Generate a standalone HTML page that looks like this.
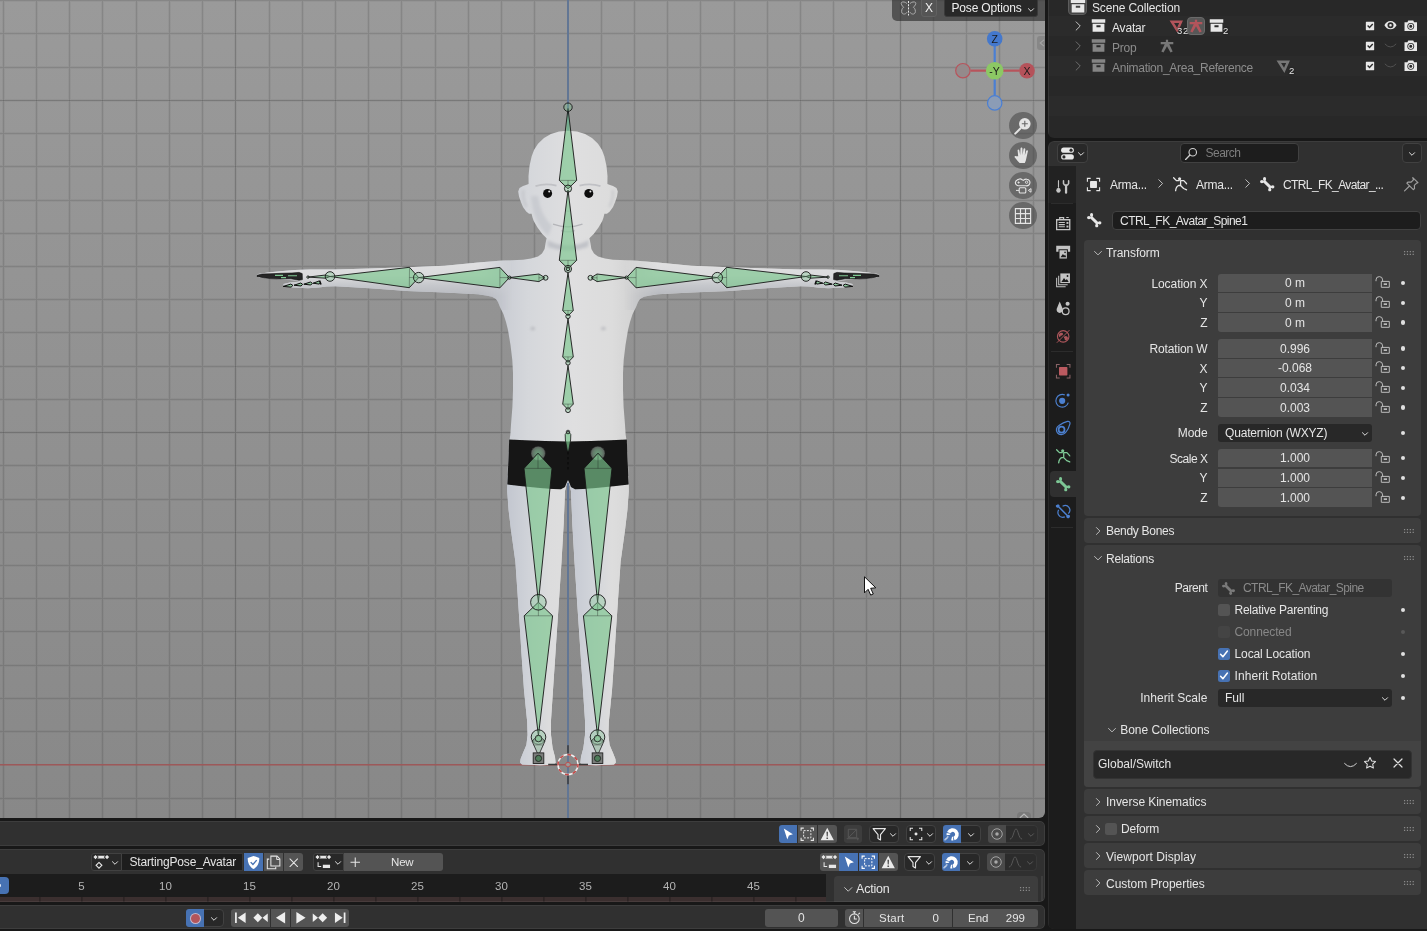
<!DOCTYPE html>
<html><head><meta charset="utf-8"><title>Blender</title>
<style>
*{box-sizing:border-box;margin:0;padding:0}
html,body{width:1427px;height:931px;overflow:hidden;background:#181818;font-family:"Liberation Sans",sans-serif;font-size:12px;color:#e5e5e5}
.abs{position:absolute}
.area{position:absolute;overflow:hidden}
#vp{left:0;top:0;width:1045px;height:818px;border-radius:0 0 6px 0;background:linear-gradient(#9a9a9a,#888888)}
#vp:after{content:"";position:absolute;left:-2px;top:-2px;width:1047px;height:820px;border-radius:0 0 6px 0;border:1px solid rgba(255,255,255,0.16);pointer-events:none}
#outl{left:1048px;top:0;width:379px;height:137.700px;border-radius:0 0 0 6px;background:#282828}
#outl:after{content:"";position:absolute;left:0;top:-2px;width:381px;height:139.700px;border-radius:0 0 0 6px;border:1px solid rgba(255,255,255,0.07);pointer-events:none}
#props{left:1048px;top:141px;width:379px;height:788px;border-radius:6px 0 0 6px;background:#303030}
#props:after{content:"";position:absolute;left:0;top:0;width:381px;height:788px;border-radius:6px 0 0 6px;border:1px solid rgba(255,255,255,0.06);pointer-events:none}
#p1{left:0;top:821px;width:1045px;height:25px;border-radius:0 5px 5px 0;background:#303030}
#p2{left:0;top:849px;width:1045px;height:52.600px;border-radius:0 5px 5px 0;background:#303030}
#p3{left:0;top:905px;width:1045px;height:24px;border-radius:0 5px 5px 0;background:#303030}
#p1:after,#p2:after,#p3:after{content:"";position:absolute;left:-2px;top:0;right:0;bottom:0;border-radius:0 5px 5px 0;border:1px solid rgba(255,255,255,0.065);pointer-events:none}
.t{position:absolute;white-space:nowrap;line-height:14px;height:14px}
.dim{color:#989898}
.fld{position:absolute;background:#545454;height:19px;left:170px;width:154px;text-align:center;line-height:19px;color:#e5e5e5}
.btn{position:absolute;background:#545454;border-radius:3px}
.dd{position:absolute;background:#282828;border-radius:4px;border:1px solid #414141}
.blue{background:#4772b3}
.panel{position:absolute;left:36px;width:337px;background:#3d3d3d;border-radius:4px}
.ph{position:absolute;left:22px;top:6.400px;line-height:14px;white-space:nowrap}
svg{position:absolute;overflow:visible}
#root{position:absolute;left:0;top:0;width:1427px;height:931px;will-change:transform}
</style></head><body><div id="root">
<div id="vp" class="area">
<svg id="grid" width="1045" height="818" viewBox="0 0 1045 818" style="left:0;top:0" shape-rendering="crispEdges">
<path d="M3.5 0V818M36.5 0V818M69.5 0V818M102.5 0V818M136.5 0V818M169.5 0V818M202.5 0V818M269.5 0V818M302.5 0V818M335.5 0V818M368.5 0V818M401.5 0V818M435.5 0V818M468.5 0V818M501.5 0V818M534.5 0V818M0 798.5H1045M601.5 0V818M0 731.5H1045M634.5 0V818M0 698.5H1045M667.5 0V818M0 665.5H1045M700.5 0V818M0 631.5H1045M734.5 0V818M0 598.5H1045M767.5 0V818M0 565.5H1045M800.5 0V818M0 532.5H1045M833.5 0V818M0 499.5H1045M866.5 0V818M0 465.5H1045M933.5 0V818M0 399.5H1045M966.5 0V818M0 366.5H1045M999.5 0V818M0 332.5H1045M1033.5 0V818M0 299.5H1045M0 266.5H1045M0 233.5H1045M0 200.5H1045M0 166.5H1045M0 133.5H1045M0 67.5H1045M0 33.5H1045M0 0.5H1045M235.5 0V818M900.5 0V818M0 432.5H1045M0 100.5H1045" stroke="#000" stroke-opacity="0.035" stroke-width="3" fill="none"/>
<path d="M3.5 0V818M36.5 0V818M69.5 0V818M102.5 0V818M136.5 0V818M169.5 0V818M202.5 0V818M269.5 0V818M302.5 0V818M335.5 0V818M368.5 0V818M401.5 0V818M435.5 0V818M468.5 0V818M501.5 0V818M534.5 0V818M0 798.5H1045M601.5 0V818M0 731.5H1045M634.5 0V818M0 698.5H1045M667.5 0V818M0 665.5H1045M700.5 0V818M0 631.5H1045M734.5 0V818M0 598.5H1045M767.5 0V818M0 565.5H1045M800.5 0V818M0 532.5H1045M833.5 0V818M0 499.5H1045M866.5 0V818M0 465.5H1045M933.5 0V818M0 399.5H1045M966.5 0V818M0 366.5H1045M999.5 0V818M0 332.5H1045M1033.5 0V818M0 299.5H1045M0 266.5H1045M0 233.5H1045M0 200.5H1045M0 166.5H1045M0 133.5H1045M0 67.5H1045M0 33.5H1045M0 0.5H1045" stroke="#000" stroke-opacity="0.092" stroke-width="1" fill="none"/>
<path d="M235.5 0V818M900.5 0V818M0 432.5H1045M0 100.5H1045" stroke="#000" stroke-opacity="0.17" stroke-width="1" fill="none"/>
<rect x="0" y="764" width="1045" height="1" fill="#9c595a"/><rect x="0" y="765" width="1045" height="1" fill="#9c595a" fill-opacity="0.55"/>
<rect x="567" y="0" width="2" height="818" fill="#627694"/>
</svg>
<svg id="model" width="1045" height="818" viewBox="0 0 1045 818" style="left:0;top:0">
<defs>
<linearGradient id="bodyg" gradientUnits="userSpaceOnUse" x1="500" y1="0" x2="640" y2="0">
<stop offset="0" stop-color="#c9ccd3"/><stop offset="0.2" stop-color="#d5d7db"/><stop offset="0.52" stop-color="#dfdfe0"/><stop offset="0.8" stop-color="#dcdcdc"/><stop offset="1" stop-color="#d0d0d0"/></linearGradient>
<linearGradient id="legL" gradientUnits="userSpaceOnUse" x1="506" y1="0" x2="567" y2="0"><stop offset="0" stop-color="#c2c6cf"/><stop offset="0.35" stop-color="#cfd2d8"/><stop offset="0.7" stop-color="#dcdcdd"/><stop offset="1" stop-color="#dedede"/></linearGradient>
<linearGradient id="legR" gradientUnits="userSpaceOnUse" x1="569" y1="0" x2="630" y2="0"><stop offset="0" stop-color="#c4c8d1"/><stop offset="0.35" stop-color="#d0d3d9"/><stop offset="0.7" stop-color="#dddddd"/><stop offset="1" stop-color="#d8d8d8"/></linearGradient>
<radialGradient id="hipg"><stop offset="0" stop-color="#6a9a78"/><stop offset="0.6" stop-color="#657f6c"/><stop offset="1" stop-color="#5a5d5b"/></radialGradient>
<clipPath id="legLc"><rect x="490" y="476" width="78" height="300"/></clipPath>
<clipPath id="legRc"><rect x="568" y="476" width="78" height="300"/></clipPath>
<linearGradient id="armg" gradientUnits="userSpaceOnUse" x1="0" y1="262" x2="0" y2="296">
<stop offset="0" stop-color="#e0e0e1"/><stop offset="0.4" stop-color="#dbdbdd"/><stop offset="0.68" stop-color="#c6c8cc"/><stop offset="1" stop-color="#b6b8be"/></linearGradient>
<linearGradient id="mgL" gradientUnits="userSpaceOnUse" x1="478" y1="0" x2="512" y2="0"><stop offset="0" stop-color="#fff"/><stop offset="1" stop-color="#000"/></linearGradient>
<linearGradient id="mgR" gradientUnits="userSpaceOnUse" x1="658" y1="0" x2="624" y2="0"><stop offset="0" stop-color="#fff"/><stop offset="1" stop-color="#000"/></linearGradient>
<mask id="armclipL" maskUnits="userSpaceOnUse" x="240" y="250" width="280" height="60"><rect x="240" y="250" width="280" height="60" fill="url(#mgL)"/></mask>
<mask id="armclipR" maskUnits="userSpaceOnUse" x="616" y="250" width="280" height="60"><rect x="616" y="250" width="280" height="60" fill="url(#mgR)"/></mask>
<clipPath id="shortsclip"><path d="M568.0 441.6 L545.0 441.0 L525.0 440.2 L509.2 439.6 L508.4 460.0 L507.6 478.0 L507.3 484.5 L520.0 486.0 L540.0 488.0 L553.0 489.0 L561.0 489.2 L565.0 487.0 L566.6 483.0 L568.0 480.0 L569.4 483.0 L571.0 487.0 L575.0 489.2 L583.0 489.0 L596.0 488.0 L616.0 486.0 L628.7 484.5 L628.4 478.0 L627.6 460.0 L626.8 439.6 L611.0 440.2 L591.0 441.0Z"/></clipPath>
<filter id="bl1" x="-20%" y="-20%" width="140%" height="140%"><feGaussianBlur stdDeviation="0.6"/></filter>
<filter id="bl2" x="-50%" y="-50%" width="200%" height="200%"><feGaussianBlur stdDeviation="1.6"/></filter>
<filter id="bl4" x="-50%" y="-50%" width="200%" height="200%"><feGaussianBlur stdDeviation="4"/></filter>
</defs>
<g filter="url(#bl1)"><path d="M568.0 130.8 L559.0 131.6 L550.9 134.0 L544.0 138.0 L538.0 143.7 L534.0 150.0 L531.6 156.6 L529.5 166.0 L528.5 176.0 L528.6 184.0 L526.0 185.0 L523.0 186.0 L519.5 188.0 L518.2 191.5 L519.0 196.5 L520.8 201.7 L523.0 207.0 L526.2 211.6 L529.0 213.8 L531.6 213.8 L532.5 217.5 L533.7 221.0 L537.5 227.5 L542.3 233.9 L546.6 238.2 L545.6 243.0 L544.6 249.0 L542.0 253.5 L538.0 256.5 L531.0 258.6 L523.0 259.7 L502.0 260.6 L478.3 262.6 L444.9 265.7 L406.8 267.2 L370.0 268.6 L335.3 269.5 L310.0 269.6 L294.8 270.0 L280.0 271.2 L268.0 272.6 L258.0 274.0 L256.5 275.6 L259.0 277.4 L270.0 278.6 L283.0 279.6 L296.0 280.4 L300.0 281.6 L290.0 282.6 L283.5 284.0 L283.5 286.0 L292.4 287.6 L308.0 288.2 L318.6 287.6 L327.0 286.4 L335.3 286.2 L353.0 287.2 L373.4 288.6 L406.8 291.0 L444.9 292.6 L478.3 294.2 L486.0 295.4 L492.0 296.8 L496.0 299.0 L498.0 302.0 L500.0 307.0 L503.4 314.0 L506.0 322.0 L508.0 330.0 L510.5 345.0 L512.3 360.0 L513.0 373.0 L513.0 390.0 L512.4 407.0 L511.2 422.0 L510.3 435.0 L509.2 442.0 L508.2 460.0 L507.4 478.0 L507.2 491.0 L508.6 510.0 L511.0 530.0 L515.4 561.7 L518.0 600.0 L520.2 632.6 L521.3 650.9 L524.0 690.0 L527.2 721.7 L527.6 735.0 L526.4 745.0 L523.0 753.0 L520.6 759.0 L520.2 762.6 L522.0 764.6 L540.0 765.2 L553.0 764.8 L555.6 763.0 L555.0 757.0 L552.6 748.0 L551.0 735.0 L550.9 721.7 L553.0 690.0 L555.6 650.9 L556.8 632.6 L559.0 600.0 L561.5 561.7 L563.6 525.0 L565.0 491.0 L566.6 484.0 L568.0 481.5 L569.4 484.0 L571.0 491.0 L572.4 525.0 L574.5 561.7 L577.0 600.0 L579.2 632.6 L580.4 650.9 L583.0 690.0 L585.1 721.7 L585.0 735.0 L583.4 748.0 L581.0 757.0 L580.4 763.0 L583.0 764.8 L596.0 765.2 L614.0 764.6 L615.8 762.6 L615.4 759.0 L613.0 753.0 L609.6 745.0 L608.4 735.0 L608.8 721.7 L612.0 690.0 L614.7 650.9 L615.8 632.6 L618.0 600.0 L620.6 561.7 L625.0 530.0 L627.4 510.0 L628.8 491.0 L628.6 478.0 L627.8 460.0 L626.8 442.0 L625.7 435.0 L624.8 422.0 L623.6 407.0 L623.0 390.0 L623.0 373.0 L623.7 360.0 L625.5 345.0 L628.0 330.0 L630.0 322.0 L632.6 314.0 L636.0 307.0 L638.0 302.0 L640.0 299.0 L644.0 296.8 L650.0 295.4 L657.7 294.2 L691.1 292.6 L729.2 291.0 L762.6 288.6 L783.0 287.2 L800.7 286.2 L809.0 286.4 L817.4 287.6 L828.0 288.2 L843.6 287.6 L852.5 286.0 L852.5 284.0 L846.0 282.6 L836.0 281.6 L840.0 280.4 L853.0 279.6 L866.0 278.6 L877.0 277.4 L879.5 275.6 L878.0 274.0 L868.0 272.6 L856.0 271.2 L841.2 270.0 L826.0 269.6 L800.7 269.5 L766.0 268.6 L729.2 267.2 L691.1 265.7 L657.7 262.6 L634.0 260.6 L613.0 259.7 L605.0 258.6 L598.0 256.5 L594.0 253.5 L591.4 249.0 L590.4 243.0 L589.4 238.2 L593.7 233.9 L598.5 227.5 L602.3 221.0 L603.5 217.5 L604.4 213.8 L607.0 213.8 L609.8 211.6 L613.0 207.0 L615.2 201.7 L617.0 196.5 L617.8 191.5 L616.5 188.0 L613.0 186.0 L610.0 185.0 L607.4 184.0 L607.5 176.0 L606.5 166.0 L604.4 156.6 L602.0 150.0 L598.0 143.7 L592.0 138.0 L585.1 134.0 L577.0 131.6Z" fill="url(#bodyg)"/>
<path d="M568.0 130.8 L559.0 131.6 L550.9 134.0 L544.0 138.0 L538.0 143.7 L534.0 150.0 L531.6 156.6 L529.5 166.0 L528.5 176.0 L528.6 184.0 L526.0 185.0 L523.0 186.0 L519.5 188.0 L518.2 191.5 L519.0 196.5 L520.8 201.7 L523.0 207.0 L526.2 211.6 L529.0 213.8 L531.6 213.8 L532.5 217.5 L533.7 221.0 L537.5 227.5 L542.3 233.9 L546.6 238.2 L545.6 243.0 L544.6 249.0 L542.0 253.5 L538.0 256.5 L531.0 258.6 L523.0 259.7 L502.0 260.6 L478.3 262.6 L444.9 265.7 L406.8 267.2 L370.0 268.6 L335.3 269.5 L310.0 269.6 L294.8 270.0 L280.0 271.2 L268.0 272.6 L258.0 274.0 L256.5 275.6 L259.0 277.4 L270.0 278.6 L283.0 279.6 L296.0 280.4 L300.0 281.6 L290.0 282.6 L283.5 284.0 L283.5 286.0 L292.4 287.6 L308.0 288.2 L318.6 287.6 L327.0 286.4 L335.3 286.2 L353.0 287.2 L373.4 288.6 L406.8 291.0 L444.9 292.6 L478.3 294.2 L486.0 295.4 L492.0 296.8 L496.0 299.0 L498.0 302.0 L500.0 307.0 L503.4 314.0 L506.0 322.0 L508.0 330.0 L510.5 345.0 L512.3 360.0 L513.0 373.0 L513.0 390.0 L512.4 407.0 L511.2 422.0 L510.3 435.0 L509.2 442.0 L508.2 460.0 L507.4 478.0 L507.2 491.0 L508.6 510.0 L511.0 530.0 L515.4 561.7 L518.0 600.0 L520.2 632.6 L521.3 650.9 L524.0 690.0 L527.2 721.7 L527.6 735.0 L526.4 745.0 L523.0 753.0 L520.6 759.0 L520.2 762.6 L522.0 764.6 L540.0 765.2 L553.0 764.8 L555.6 763.0 L555.0 757.0 L552.6 748.0 L551.0 735.0 L550.9 721.7 L553.0 690.0 L555.6 650.9 L556.8 632.6 L559.0 600.0 L561.5 561.7 L563.6 525.0 L565.0 491.0 L566.6 484.0 L568.0 481.5 L569.4 484.0 L571.0 491.0 L572.4 525.0 L574.5 561.7 L577.0 600.0 L579.2 632.6 L580.4 650.9 L583.0 690.0 L585.1 721.7 L585.0 735.0 L583.4 748.0 L581.0 757.0 L580.4 763.0 L583.0 764.8 L596.0 765.2 L614.0 764.6 L615.8 762.6 L615.4 759.0 L613.0 753.0 L609.6 745.0 L608.4 735.0 L608.8 721.7 L612.0 690.0 L614.7 650.9 L615.8 632.6 L618.0 600.0 L620.6 561.7 L625.0 530.0 L627.4 510.0 L628.8 491.0 L628.6 478.0 L627.8 460.0 L626.8 442.0 L625.7 435.0 L624.8 422.0 L623.6 407.0 L623.0 390.0 L623.0 373.0 L623.7 360.0 L625.5 345.0 L628.0 330.0 L630.0 322.0 L632.6 314.0 L636.0 307.0 L638.0 302.0 L640.0 299.0 L644.0 296.8 L650.0 295.4 L657.7 294.2 L691.1 292.6 L729.2 291.0 L762.6 288.6 L783.0 287.2 L800.7 286.2 L809.0 286.4 L817.4 287.6 L828.0 288.2 L843.6 287.6 L852.5 286.0 L852.5 284.0 L846.0 282.6 L836.0 281.6 L840.0 280.4 L853.0 279.6 L866.0 278.6 L877.0 277.4 L879.5 275.6 L878.0 274.0 L868.0 272.6 L856.0 271.2 L841.2 270.0 L826.0 269.6 L800.7 269.5 L766.0 268.6 L729.2 267.2 L691.1 265.7 L657.7 262.6 L634.0 260.6 L613.0 259.7 L605.0 258.6 L598.0 256.5 L594.0 253.5 L591.4 249.0 L590.4 243.0 L589.4 238.2 L593.7 233.9 L598.5 227.5 L602.3 221.0 L603.5 217.5 L604.4 213.8 L607.0 213.8 L609.8 211.6 L613.0 207.0 L615.2 201.7 L617.0 196.5 L617.8 191.5 L616.5 188.0 L613.0 186.0 L610.0 185.0 L607.4 184.0 L607.5 176.0 L606.5 166.0 L604.4 156.6 L602.0 150.0 L598.0 143.7 L592.0 138.0 L585.1 134.0 L577.0 131.6Z" fill="url(#armg)" mask="url(#armclipL)"/>
<path d="M568.0 130.8 L559.0 131.6 L550.9 134.0 L544.0 138.0 L538.0 143.7 L534.0 150.0 L531.6 156.6 L529.5 166.0 L528.5 176.0 L528.6 184.0 L526.0 185.0 L523.0 186.0 L519.5 188.0 L518.2 191.5 L519.0 196.5 L520.8 201.7 L523.0 207.0 L526.2 211.6 L529.0 213.8 L531.6 213.8 L532.5 217.5 L533.7 221.0 L537.5 227.5 L542.3 233.9 L546.6 238.2 L545.6 243.0 L544.6 249.0 L542.0 253.5 L538.0 256.5 L531.0 258.6 L523.0 259.7 L502.0 260.6 L478.3 262.6 L444.9 265.7 L406.8 267.2 L370.0 268.6 L335.3 269.5 L310.0 269.6 L294.8 270.0 L280.0 271.2 L268.0 272.6 L258.0 274.0 L256.5 275.6 L259.0 277.4 L270.0 278.6 L283.0 279.6 L296.0 280.4 L300.0 281.6 L290.0 282.6 L283.5 284.0 L283.5 286.0 L292.4 287.6 L308.0 288.2 L318.6 287.6 L327.0 286.4 L335.3 286.2 L353.0 287.2 L373.4 288.6 L406.8 291.0 L444.9 292.6 L478.3 294.2 L486.0 295.4 L492.0 296.8 L496.0 299.0 L498.0 302.0 L500.0 307.0 L503.4 314.0 L506.0 322.0 L508.0 330.0 L510.5 345.0 L512.3 360.0 L513.0 373.0 L513.0 390.0 L512.4 407.0 L511.2 422.0 L510.3 435.0 L509.2 442.0 L508.2 460.0 L507.4 478.0 L507.2 491.0 L508.6 510.0 L511.0 530.0 L515.4 561.7 L518.0 600.0 L520.2 632.6 L521.3 650.9 L524.0 690.0 L527.2 721.7 L527.6 735.0 L526.4 745.0 L523.0 753.0 L520.6 759.0 L520.2 762.6 L522.0 764.6 L540.0 765.2 L553.0 764.8 L555.6 763.0 L555.0 757.0 L552.6 748.0 L551.0 735.0 L550.9 721.7 L553.0 690.0 L555.6 650.9 L556.8 632.6 L559.0 600.0 L561.5 561.7 L563.6 525.0 L565.0 491.0 L566.6 484.0 L568.0 481.5 L569.4 484.0 L571.0 491.0 L572.4 525.0 L574.5 561.7 L577.0 600.0 L579.2 632.6 L580.4 650.9 L583.0 690.0 L585.1 721.7 L585.0 735.0 L583.4 748.0 L581.0 757.0 L580.4 763.0 L583.0 764.8 L596.0 765.2 L614.0 764.6 L615.8 762.6 L615.4 759.0 L613.0 753.0 L609.6 745.0 L608.4 735.0 L608.8 721.7 L612.0 690.0 L614.7 650.9 L615.8 632.6 L618.0 600.0 L620.6 561.7 L625.0 530.0 L627.4 510.0 L628.8 491.0 L628.6 478.0 L627.8 460.0 L626.8 442.0 L625.7 435.0 L624.8 422.0 L623.6 407.0 L623.0 390.0 L623.0 373.0 L623.7 360.0 L625.5 345.0 L628.0 330.0 L630.0 322.0 L632.6 314.0 L636.0 307.0 L638.0 302.0 L640.0 299.0 L644.0 296.8 L650.0 295.4 L657.7 294.2 L691.1 292.6 L729.2 291.0 L762.6 288.6 L783.0 287.2 L800.7 286.2 L809.0 286.4 L817.4 287.6 L828.0 288.2 L843.6 287.6 L852.5 286.0 L852.5 284.0 L846.0 282.6 L836.0 281.6 L840.0 280.4 L853.0 279.6 L866.0 278.6 L877.0 277.4 L879.5 275.6 L878.0 274.0 L868.0 272.6 L856.0 271.2 L841.2 270.0 L826.0 269.6 L800.7 269.5 L766.0 268.6 L729.2 267.2 L691.1 265.7 L657.7 262.6 L634.0 260.6 L613.0 259.7 L605.0 258.6 L598.0 256.5 L594.0 253.5 L591.4 249.0 L590.4 243.0 L589.4 238.2 L593.7 233.9 L598.5 227.5 L602.3 221.0 L603.5 217.5 L604.4 213.8 L607.0 213.8 L609.8 211.6 L613.0 207.0 L615.2 201.7 L617.0 196.5 L617.8 191.5 L616.5 188.0 L613.0 186.0 L610.0 185.0 L607.4 184.0 L607.5 176.0 L606.5 166.0 L604.4 156.6 L602.0 150.0 L598.0 143.7 L592.0 138.0 L585.1 134.0 L577.0 131.6Z" fill="url(#armg)" mask="url(#armclipR)"/>
<path d="M568.0 130.8 L559.0 131.6 L550.9 134.0 L544.0 138.0 L538.0 143.7 L534.0 150.0 L531.6 156.6 L529.5 166.0 L528.5 176.0 L528.6 184.0 L526.0 185.0 L523.0 186.0 L519.5 188.0 L518.2 191.5 L519.0 196.5 L520.8 201.7 L523.0 207.0 L526.2 211.6 L529.0 213.8 L531.6 213.8 L532.5 217.5 L533.7 221.0 L537.5 227.5 L542.3 233.9 L546.6 238.2 L545.6 243.0 L544.6 249.0 L542.0 253.5 L538.0 256.5 L531.0 258.6 L523.0 259.7 L502.0 260.6 L478.3 262.6 L444.9 265.7 L406.8 267.2 L370.0 268.6 L335.3 269.5 L310.0 269.6 L294.8 270.0 L280.0 271.2 L268.0 272.6 L258.0 274.0 L256.5 275.6 L259.0 277.4 L270.0 278.6 L283.0 279.6 L296.0 280.4 L300.0 281.6 L290.0 282.6 L283.5 284.0 L283.5 286.0 L292.4 287.6 L308.0 288.2 L318.6 287.6 L327.0 286.4 L335.3 286.2 L353.0 287.2 L373.4 288.6 L406.8 291.0 L444.9 292.6 L478.3 294.2 L486.0 295.4 L492.0 296.8 L496.0 299.0 L498.0 302.0 L500.0 307.0 L503.4 314.0 L506.0 322.0 L508.0 330.0 L510.5 345.0 L512.3 360.0 L513.0 373.0 L513.0 390.0 L512.4 407.0 L511.2 422.0 L510.3 435.0 L509.2 442.0 L508.2 460.0 L507.4 478.0 L507.2 491.0 L508.6 510.0 L511.0 530.0 L515.4 561.7 L518.0 600.0 L520.2 632.6 L521.3 650.9 L524.0 690.0 L527.2 721.7 L527.6 735.0 L526.4 745.0 L523.0 753.0 L520.6 759.0 L520.2 762.6 L522.0 764.6 L540.0 765.2 L553.0 764.8 L555.6 763.0 L555.0 757.0 L552.6 748.0 L551.0 735.0 L550.9 721.7 L553.0 690.0 L555.6 650.9 L556.8 632.6 L559.0 600.0 L561.5 561.7 L563.6 525.0 L565.0 491.0 L566.6 484.0 L568.0 481.5 L569.4 484.0 L571.0 491.0 L572.4 525.0 L574.5 561.7 L577.0 600.0 L579.2 632.6 L580.4 650.9 L583.0 690.0 L585.1 721.7 L585.0 735.0 L583.4 748.0 L581.0 757.0 L580.4 763.0 L583.0 764.8 L596.0 765.2 L614.0 764.6 L615.8 762.6 L615.4 759.0 L613.0 753.0 L609.6 745.0 L608.4 735.0 L608.8 721.7 L612.0 690.0 L614.7 650.9 L615.8 632.6 L618.0 600.0 L620.6 561.7 L625.0 530.0 L627.4 510.0 L628.8 491.0 L628.6 478.0 L627.8 460.0 L626.8 442.0 L625.7 435.0 L624.8 422.0 L623.6 407.0 L623.0 390.0 L623.0 373.0 L623.7 360.0 L625.5 345.0 L628.0 330.0 L630.0 322.0 L632.6 314.0 L636.0 307.0 L638.0 302.0 L640.0 299.0 L644.0 296.8 L650.0 295.4 L657.7 294.2 L691.1 292.6 L729.2 291.0 L762.6 288.6 L783.0 287.2 L800.7 286.2 L809.0 286.4 L817.4 287.6 L828.0 288.2 L843.6 287.6 L852.5 286.0 L852.5 284.0 L846.0 282.6 L836.0 281.6 L840.0 280.4 L853.0 279.6 L866.0 278.6 L877.0 277.4 L879.5 275.6 L878.0 274.0 L868.0 272.6 L856.0 271.2 L841.2 270.0 L826.0 269.6 L800.7 269.5 L766.0 268.6 L729.2 267.2 L691.1 265.7 L657.7 262.6 L634.0 260.6 L613.0 259.7 L605.0 258.6 L598.0 256.5 L594.0 253.5 L591.4 249.0 L590.4 243.0 L589.4 238.2 L593.7 233.9 L598.5 227.5 L602.3 221.0 L603.5 217.5 L604.4 213.8 L607.0 213.8 L609.8 211.6 L613.0 207.0 L615.2 201.7 L617.0 196.5 L617.8 191.5 L616.5 188.0 L613.0 186.0 L610.0 185.0 L607.4 184.0 L607.5 176.0 L606.5 166.0 L604.4 156.6 L602.0 150.0 L598.0 143.7 L592.0 138.0 L585.1 134.0 L577.0 131.6Z" fill="url(#legL)" clip-path="url(#legLc)"/>
<path d="M568.0 130.8 L559.0 131.6 L550.9 134.0 L544.0 138.0 L538.0 143.7 L534.0 150.0 L531.6 156.6 L529.5 166.0 L528.5 176.0 L528.6 184.0 L526.0 185.0 L523.0 186.0 L519.5 188.0 L518.2 191.5 L519.0 196.5 L520.8 201.7 L523.0 207.0 L526.2 211.6 L529.0 213.8 L531.6 213.8 L532.5 217.5 L533.7 221.0 L537.5 227.5 L542.3 233.9 L546.6 238.2 L545.6 243.0 L544.6 249.0 L542.0 253.5 L538.0 256.5 L531.0 258.6 L523.0 259.7 L502.0 260.6 L478.3 262.6 L444.9 265.7 L406.8 267.2 L370.0 268.6 L335.3 269.5 L310.0 269.6 L294.8 270.0 L280.0 271.2 L268.0 272.6 L258.0 274.0 L256.5 275.6 L259.0 277.4 L270.0 278.6 L283.0 279.6 L296.0 280.4 L300.0 281.6 L290.0 282.6 L283.5 284.0 L283.5 286.0 L292.4 287.6 L308.0 288.2 L318.6 287.6 L327.0 286.4 L335.3 286.2 L353.0 287.2 L373.4 288.6 L406.8 291.0 L444.9 292.6 L478.3 294.2 L486.0 295.4 L492.0 296.8 L496.0 299.0 L498.0 302.0 L500.0 307.0 L503.4 314.0 L506.0 322.0 L508.0 330.0 L510.5 345.0 L512.3 360.0 L513.0 373.0 L513.0 390.0 L512.4 407.0 L511.2 422.0 L510.3 435.0 L509.2 442.0 L508.2 460.0 L507.4 478.0 L507.2 491.0 L508.6 510.0 L511.0 530.0 L515.4 561.7 L518.0 600.0 L520.2 632.6 L521.3 650.9 L524.0 690.0 L527.2 721.7 L527.6 735.0 L526.4 745.0 L523.0 753.0 L520.6 759.0 L520.2 762.6 L522.0 764.6 L540.0 765.2 L553.0 764.8 L555.6 763.0 L555.0 757.0 L552.6 748.0 L551.0 735.0 L550.9 721.7 L553.0 690.0 L555.6 650.9 L556.8 632.6 L559.0 600.0 L561.5 561.7 L563.6 525.0 L565.0 491.0 L566.6 484.0 L568.0 481.5 L569.4 484.0 L571.0 491.0 L572.4 525.0 L574.5 561.7 L577.0 600.0 L579.2 632.6 L580.4 650.9 L583.0 690.0 L585.1 721.7 L585.0 735.0 L583.4 748.0 L581.0 757.0 L580.4 763.0 L583.0 764.8 L596.0 765.2 L614.0 764.6 L615.8 762.6 L615.4 759.0 L613.0 753.0 L609.6 745.0 L608.4 735.0 L608.8 721.7 L612.0 690.0 L614.7 650.9 L615.8 632.6 L618.0 600.0 L620.6 561.7 L625.0 530.0 L627.4 510.0 L628.8 491.0 L628.6 478.0 L627.8 460.0 L626.8 442.0 L625.7 435.0 L624.8 422.0 L623.6 407.0 L623.0 390.0 L623.0 373.0 L623.7 360.0 L625.5 345.0 L628.0 330.0 L630.0 322.0 L632.6 314.0 L636.0 307.0 L638.0 302.0 L640.0 299.0 L644.0 296.8 L650.0 295.4 L657.7 294.2 L691.1 292.6 L729.2 291.0 L762.6 288.6 L783.0 287.2 L800.7 286.2 L809.0 286.4 L817.4 287.6 L828.0 288.2 L843.6 287.6 L852.5 286.0 L852.5 284.0 L846.0 282.6 L836.0 281.6 L840.0 280.4 L853.0 279.6 L866.0 278.6 L877.0 277.4 L879.5 275.6 L878.0 274.0 L868.0 272.6 L856.0 271.2 L841.2 270.0 L826.0 269.6 L800.7 269.5 L766.0 268.6 L729.2 267.2 L691.1 265.7 L657.7 262.6 L634.0 260.6 L613.0 259.7 L605.0 258.6 L598.0 256.5 L594.0 253.5 L591.4 249.0 L590.4 243.0 L589.4 238.2 L593.7 233.9 L598.5 227.5 L602.3 221.0 L603.5 217.5 L604.4 213.8 L607.0 213.8 L609.8 211.6 L613.0 207.0 L615.2 201.7 L617.0 196.5 L617.8 191.5 L616.5 188.0 L613.0 186.0 L610.0 185.0 L607.4 184.0 L607.5 176.0 L606.5 166.0 L604.4 156.6 L602.0 150.0 L598.0 143.7 L592.0 138.0 L585.1 134.0 L577.0 131.6Z" fill="url(#legR)" clip-path="url(#legRc)"/></g><!-- face -->
<g filter="url(#bl2)">
<path d="M547 240Q568 251 589 240L588 247Q568 254 548 247Z" fill="#b9bcc2" fill-opacity="0.800"/>
<path d="M531 196Q533 222 548 236L552 226Q540 214 538 196Z" fill="#c3c6cc" fill-opacity="0.700"/>
</g>
<g filter="url(#bl1)">
<circle cx="547.600" cy="193.400" r="4.500" fill="#0e0e0e"/><circle cx="588.800" cy="193.400" r="4.500" fill="#0e0e0e"/>
<circle cx="549.200" cy="191.600" r="1" fill="#e8e8e8"/><circle cx="590.400" cy="191.600" r="1" fill="#e8e8e8"/>
<path d="M535.500 186.200Q545 183 556.500 185.600" stroke="#c0c1c5" stroke-width="1.800" fill="none"/>
<path d="M579.500 185.600Q591 183 600.500 186.200" stroke="#c0c1c5" stroke-width="1.800" fill="none"/>
<path d="M553 224.200Q568 229.500 582.500 224.200" stroke="#b4b5b9" stroke-width="1.400" fill="none"/>
<path d="M561 230.500Q568 233 575 230.500" stroke="#c8c9cc" stroke-width="1.600" fill="none"/>
<path d="M565.500 210Q568 212.500 570.500 210" stroke="#c6c7ca" stroke-width="1.400" fill="none"/>
</g>
<g filter="url(#bl2)">
<ellipse cx="532.800" cy="328.600" rx="2.200" ry="1.500" fill="#b4b5ba"/><ellipse cx="603.400" cy="328.600" rx="2.200" ry="1.500" fill="#b4b5ba"/>
<path d="M523.500 190Q522 198 526.500 207" stroke="#c2c4c9" stroke-width="2" fill="none"/>
<path d="M612.500 190Q614 198 609.500 207" stroke="#c6c7ca" stroke-width="2" fill="none"/>
</g>
<path d="M568.0 441.6 L545.0 441.0 L525.0 440.2 L509.2 439.6 L508.4 460.0 L507.6 478.0 L507.3 484.5 L520.0 486.0 L540.0 488.0 L553.0 489.0 L561.0 489.2 L565.0 487.0 L566.6 483.0 L568.0 480.0 L569.4 483.0 L571.0 487.0 L575.0 489.2 L583.0 489.0 L596.0 488.0 L616.0 486.0 L628.7 484.5 L628.4 478.0 L627.6 460.0 L626.8 439.6 L611.0 440.2 L591.0 441.0Z" fill="#141414" filter="url(#bl1)"/>
<circle cx="538.2" cy="453.4" r="7.2" fill="url(#hipg)" stroke="#1a1a1a" stroke-width="0.7" stroke-opacity="0.6"/>
<circle cx="597.8" cy="453.4" r="7.2" fill="url(#hipg)" stroke="#1a1a1a" stroke-width="0.7" stroke-opacity="0.6"/>
<g fill="#7cc78f" fill-opacity="0.66" stroke="#161616" stroke-width="0.9" stroke-linejoin="round">
<path d="M568.0 188.8 L576.7 180.4 L568.0 108.5 L559.3 180.4ZM568.0 268.6 L576.7 260.3 L568.0 190.0 L559.3 260.3ZM568.0 315.9 L573.3 310.5 L568.0 272.7 L562.7 310.5ZM568.0 362.4 L573.3 356.9 L568.0 318.7 L562.7 356.9ZM568.0 409.6 L573.3 404.1 L568.0 365.4 L562.7 404.1ZM545.0 277.8 L539.0 274.0 L509.4 277.6 L538.9 281.6ZM509.4 277.6 L499.9 267.4 L418.7 277.6 L499.9 287.8ZM418.7 277.6 L409.5 267.3 L330.0 276.5 L409.3 287.7ZM330.0 276.5 L325.6 275.0 L308.0 277.1 L325.6 278.2ZM591.0 277.8 L597.1 281.6 L626.6 277.6 L597.0 274.0ZM626.6 277.6 L636.1 287.8 L717.3 277.6 L636.1 267.4ZM717.3 277.6 L726.7 287.7 L806.0 276.5 L726.5 267.3ZM806.0 276.5 L810.4 278.2 L828.0 277.1 L810.4 275.0ZM538.0 453.2 L524.0 468.4 L538.4 602.2 L552.0 468.4ZM538.4 602.2 L524.2 615.8 L538.4 735.8 L552.6 615.8ZM598.0 453.2 L584.0 468.4 L597.6 602.2 L612.0 468.4ZM597.6 602.2 L583.4 615.8 L597.6 735.8 L611.8 615.8Z"/>
</g>
<path d="M576.7 180.4L559.3 180.4M568.0 188.8L568.0 180.4M576.7 260.3L559.3 260.3M568.0 268.6L568.0 260.3M573.3 310.5L562.7 310.5M568.0 315.9L568.0 310.5M573.3 356.9L562.7 356.9M568.0 362.4L568.0 356.9M573.3 404.1L562.7 404.1M568.0 409.6L568.0 404.1M539.0 274.0L538.9 281.6M545.0 277.8L538.9 277.8M499.9 267.4L499.9 287.8M509.4 277.6L499.9 277.6M409.5 267.3L409.3 287.7M418.7 277.6L409.4 277.5M325.6 275.0L325.6 278.2M330.0 276.5L325.6 276.6M597.1 281.6L597.0 274.0M591.0 277.8L597.1 277.8M636.1 287.8L636.1 267.4M626.6 277.6L636.1 277.6M726.7 287.7L726.5 267.3M717.3 277.6L726.6 277.5M810.4 278.2L810.4 275.0M806.0 276.5L810.4 276.6M524.0 468.4L552.0 468.4M538.0 453.2L538.0 468.4M524.2 615.8L552.6 615.8M538.4 602.2L538.4 615.8M584.0 468.4L612.0 468.4M598.0 453.2L598.0 468.4M583.4 615.8L611.8 615.8M597.6 602.2L597.6 615.8" stroke="#161616" stroke-width="0.6" stroke-opacity="0.55" fill="none"/>
<g fill="#7cc78f" fill-opacity="0.35" stroke="#161616" stroke-width="0.9">
<circle cx="568.0" cy="107.2" r="4.2"/>
<circle cx="568.0" cy="188.6" r="3.6"/>
<circle cx="568.0" cy="268.9" r="3.6"/>
<circle cx="568.0" cy="268.9" r="1.8"/>
<circle cx="568.0" cy="316.4" r="2.2"/>
<circle cx="568.0" cy="362.9" r="2.2"/>
<circle cx="568.0" cy="410.2" r="2.4"/>
<circle cx="545.6" cy="277.8" r="2.4"/>
<circle cx="509.4" cy="277.6" r="1.6"/>
<circle cx="418.7" cy="277.6" r="5.2"/>
<circle cx="330.0" cy="276.5" r="4.8"/>
<circle cx="308.0" cy="277.1" r="1.2"/>
<circle cx="590.4" cy="277.8" r="2.4"/>
<circle cx="626.6" cy="277.6" r="1.6"/>
<circle cx="717.3" cy="277.6" r="5.2"/>
<circle cx="806.0" cy="276.5" r="4.8"/>
<circle cx="828.0" cy="277.1" r="1.2"/>
<circle cx="538.4" cy="602.3" r="7.8"/>
<circle cx="538.5" cy="737.1" r="7.3"/>
<circle cx="597.6" cy="602.3" r="7.8"/>
<circle cx="597.5" cy="737.1" r="7.3"/>
</g><!-- hip bone -->
<path d="M568 431L570.8 434.5L570.6 440L568.6 451H567.4L565.4 440L565.2 434.5Z" fill="#7cc78f" fill-opacity="0.7" stroke="#161616" stroke-width="0.8"/>
<circle cx="568" cy="432" r="1.8" fill="none" stroke="#161616" stroke-width="0.8"/>
<path d="M568 452V470" stroke="#0a0a0a" stroke-width="1.2" stroke-dasharray="2.5 2.5" fill="none"/>
<!-- feet bones -->
<path d="M538.5 735.500L545.0 741L539.5 753.300H537.5L532.0 741Z" fill="#8fb89b" fill-opacity="0.55" stroke="#1c1c1c" stroke-width="0.800"/>
<path d="M532.0 741H545.0M533.5 745H543.5" stroke="#1c1c1c" stroke-width="0.500" stroke-opacity="0.600" fill="none"/>
<rect x="533.2" y="752.900" width="10.600" height="10.600" fill="#7a7d7b" stroke="#222" stroke-width="0.900"/>
<circle cx="538.5" cy="758.400" r="3.100" fill="#4e7c5a" stroke="#1c1c1c" stroke-width="0.800"/>
<circle cx="538.5" cy="738.500" r="3.300" fill="#86c596" fill-opacity="0.700" stroke="#1c1c1c" stroke-width="0.800"/>
<path d="M597.5 735.500L604.0 741L598.5 753.300H596.5L591.0 741Z" fill="#8fb89b" fill-opacity="0.55" stroke="#1c1c1c" stroke-width="0.800"/>
<path d="M591.0 741H604.0M592.5 745H602.5" stroke="#1c1c1c" stroke-width="0.500" stroke-opacity="0.600" fill="none"/>
<rect x="592.2" y="752.900" width="10.600" height="10.600" fill="#7a7d7b" stroke="#222" stroke-width="0.900"/>
<circle cx="597.5" cy="758.400" r="3.100" fill="#4e7c5a" stroke="#1c1c1c" stroke-width="0.800"/>
<circle cx="597.5" cy="738.500" r="3.300" fill="#86c596" fill-opacity="0.700" stroke="#1c1c1c" stroke-width="0.800"/>
<!-- finger scribbles -->
<path d="M257.0 275.3 L262.0 274 L270.0 273.8 L281.0 273.3 L292.0 273 L299.0 272.4 L302.2 273.6 L302.4 279.6 L299.0 280.2 L291.0 278.8 L281.0 279 L270.0 278.6 L262.0 277.4 L257.0 276.4Z" fill="#0d0d0d" fill-opacity="0.880" stroke="#0d0d0d" stroke-width="0.600" stroke-linejoin="round"/>
<path d="M275.0 275.400H283.0M288.0 275.800H297.0M281.0 277.600H286.0" stroke="#7fc892" stroke-width="1.100" fill="none"/>
<path d="M292.9 285.4L290.8 284.1L283.2 286.4L291.1 287.1ZM302.6 284.3L300.8 283.0L294.0 285.2L301.1 286.0ZM312.4 283.3L310.5 282.0L303.8 284.2L310.8 285.0ZM320.6 282.4L318.9 281.1L313.1 283.2L319.3 284.1Z" fill="#7fc892" fill-opacity="0.800" stroke="#0d0d0d" stroke-width="1" stroke-linejoin="round"/>
<path d="M319.5 280.500L321.0 284.500" stroke="#0d0d0d" stroke-width="1.600"/>
<path d="M879.0 275.3 L874.0 274 L866.0 273.8 L855.0 273.3 L844.0 273 L837.0 272.4 L833.8 273.6 L833.6 279.6 L837.0 280.2 L845.0 278.8 L855.0 279 L866.0 278.6 L874.0 277.4 L879.0 276.4Z" fill="#0d0d0d" fill-opacity="0.880" stroke="#0d0d0d" stroke-width="0.600" stroke-linejoin="round"/>
<path d="M861.0 275.400H853.0M848.0 275.800H839.0M855.0 277.600H850.0" stroke="#7fc892" stroke-width="1.100" fill="none"/>
<path d="M843.1 285.4L845.2 284.1L852.8 286.4L844.9 287.1ZM833.4 284.3L835.2 283.0L842.0 285.2L834.9 286.0ZM823.6 283.3L825.5 282.0L832.2 284.2L825.2 285.0ZM815.4 282.4L817.1 281.1L822.9 283.2L816.7 284.1Z" fill="#7fc892" fill-opacity="0.800" stroke="#0d0d0d" stroke-width="1" stroke-linejoin="round"/>
<path d="M816.5 280.500L815.0 284.500" stroke="#0d0d0d" stroke-width="1.600"/>
<!-- 3d cursor -->
<g fill="none">
<path d="M548.200 764.600H558M579 764.600H588M568 745.200V753.700M568 775.300V784.200" stroke="#3a3a3a" stroke-width="1.500"/>
<circle cx="568" cy="764.600" r="10" stroke="#f0f0f0" stroke-width="1.500"/>
<circle cx="568" cy="764.600" r="10" stroke="#c24a48" stroke-width="1.600" stroke-dasharray="3.927 3.927" stroke-dashoffset="1"/>
<circle cx="568" cy="764.600" r="2.400" stroke="#c0504d" stroke-width="1" fill="#9a9a9a"/>
</g>
</svg>
<!-- header bar -->
<div class="abs" style="left:892px;top:-4px;width:160px;height:24.600px;border-radius:5px;background:rgba(40,40,40,0.62)"></div>
<svg style="left:900px;top:0.500px" width="17" height="15" viewBox="0 0 17 15"><path d="M7 2.600C5.600 .8 2.400 .4 1.400 1.600 .6 2.800 2.200 5 3.600 6.200 2 7.400 1 10 2 12c1.200 1.800 4 1.200 5-.8M10 2.600c1.400-1.800 4.600-2.200 5.600-1 .8 1.200-.8 3.400-2.200 4.600 1.600 1.200 2.600 3.800 1.600 5.800-1.200 1.800-4 1.200-5-.8" fill="none" stroke="#b4b4b4" stroke-width="0.900"/><path d="M8.500 0v14.500" stroke="#e6e6e6" stroke-width="1" stroke-dasharray="2 1.200"/></svg>
<div class="abs" style="left:920.600px;top:-3px;width:16.800px;height:20.400px;border-radius:3px;background:#555555;border:1px solid #616161"></div>
<div class="t" style="left:920.600px;width:16.800px;text-align:center;top:1px;color:#eee">X</div>
<div class="abs" style="left:943.800px;top:-3px;width:94.500px;height:20.400px;border-radius:3px;background:#282828;border:1px solid #3a3a3a"></div>
<div class="t" style="left:951.500px;top:1px;color:#eee;letter-spacing:-0.17px">Pose Options</div>
<svg style="left:1027px;top:5.500px;color:#e0e0e0" width="8" height="8"><use href="#i-ddarrow"/></svg>
<!-- side tab -->
<div class="abs" style="left:1037px;top:36px;width:12px;height:13.600px;border-radius:3px;background:#878787"></div>
<svg style="left:1038.500px;top:39px" width="6" height="8" viewBox="0 0 6 8"><path d="M5 .8L1.200 4 5 7.200" fill="none" stroke="#a6a6a6" stroke-width="1.100"/></svg>
<div class="abs" style="left:1017px;top:812px;width:14px;height:10px;border-radius:4px;background:#7a7a7a"></div>
<svg style="left:1019px;top:813px" width="10" height="6" viewBox="0 0 10 6"><path d="M.8 4.900L5 1 9.200 4.900" fill="none" stroke="#b8b8b8" stroke-width="1.200"/></svg>
<!-- gizmo -->
<svg style="left:0;top:0" width="1045" height="140" viewBox="0 0 1045 140">
<path d="M994.700 46V63M994.700 79V95.500" stroke="#4a7fd4" stroke-width="2.200"/>
<path d="M970.600 70.700H986.500M1003 70.700H1019.500" stroke="#b8545c" stroke-width="2.200"/>
<circle cx="962.900" cy="70.700" r="7.200" fill="#948a8b" stroke="#b8545c" stroke-width="1.200"/>
<circle cx="994.700" cy="102.900" r="7.200" fill="#8b9cb6" stroke="#4a7fd4" stroke-width="1.200"/>
<circle cx="994.700" cy="38.700" r="7.800" fill="#4478cc"/>
<circle cx="1027" cy="70.700" r="7.800" fill="#b5525a"/>
<circle cx="994.700" cy="70.700" r="8.800" fill="#8cc864"/>
<g font-family="Liberation Sans,sans-serif" font-size="10.500" fill="#1a1a1a" text-anchor="middle"><text x="994.700" y="42.500">Z</text><text x="1027" y="74.500">X</text><text x="994.400" y="74.600" font-size="10.500">-Y</text></g>
</svg>
<!-- nav buttons -->
<div class="abs" style="left:1009.200px;top:111.700px;width:27.600px;height:27.600px;border-radius:50%;background:rgba(60,60,60,0.5)"></div>
<div class="abs" style="left:1009.200px;top:141.800px;width:27.600px;height:27.600px;border-radius:50%;background:rgba(60,60,60,0.5)"></div>
<div class="abs" style="left:1009.200px;top:171.800px;width:27.600px;height:27.600px;border-radius:50%;background:rgba(60,60,60,0.5)"></div>
<div class="abs" style="left:1009.200px;top:201.900px;width:27.600px;height:27.600px;border-radius:50%;background:rgba(60,60,60,0.5)"></div>
<svg style="left:1013px;top:115.500px" width="20" height="20" viewBox="0 0 20 20"><circle cx="11.800" cy="7.800" r="5.800" fill="#e4e4e4"/><path d="M7.600 12.200L2.200 17.600" stroke="#e4e4e4" stroke-width="2" stroke-linecap="round"/><path d="M11.800 4.800v6M8.800 7.800h6" stroke="#666" stroke-width="1.100"/></svg>
<svg style="left:1013px;top:145.600px" width="20" height="20" viewBox="0 0 20 20"><path d="M5.200 10.200L4.600 4.400c-.1-1.200 1.500-1.400 1.700-.2L7.200 9l.3-6.600c.1-1.300 1.900-1.300 1.900 0L9.600 9l.9-6c.2-1.200 1.900-1 1.800 .2L11.800 9.400l1.400-4.600c.4-1.200 2-.6 1.700 .5L13.400 12c-.3 2-.8 3.600-1.600 5H6.600c-1.400-1.400-3-3.200-4.800-5.400-.7-.9 .3-2 1.200-1.400z" fill="#e4e4e4"/></svg>
<svg style="left:1013px;top:175.600px" width="20" height="20" viewBox="0 0 20 20"><path d="M5.600 3.400c1-.7 2.600-.6 3.600 .4l1.200 .6c1-.9 2.200-1.400 3.400-1.200 2.400 .3 3.600 2.400 3 4.200-.5 1.700-2.200 2.600-4 2.400H5.600C3.600 9.600 2.200 8.200 2.400 6.400c.1-1.300 1.400-2.600 3.200-3z" fill="none" stroke="#e4e4e4" stroke-width="1.100"/><circle cx="13.600" cy="6.200" r="1.200" fill="none" stroke="#e4e4e4" stroke-width=".9"/><path d="M5.600 5.400v2.200M4.500 6.500h2.200" stroke="#e4e4e4" stroke-width=".9"/><rect x="6.200" y="11.800" width="6.600" height="5.200" rx="1" fill="none" stroke="#e4e4e4" stroke-width="1.100"/><path d="M3 14.400h3M15.400 14.400l2.600-1.800v3.600z" fill="none" stroke="#e4e4e4" stroke-width="1"/></svg>
<svg style="left:1013px;top:205.700px" width="20" height="20" viewBox="0 0 20 20"><path d="M2.400 2.600h15.200v14.800H2.400zM7.500 2.600v14.800M12.500 2.600v14.800M2.400 7.600h15.200M2.400 12.500h15.200" fill="none" stroke="#e4e4e4" stroke-width="1.150"/></svg>
<!-- mouse cursor -->
<svg style="left:864.200px;top:576px" width="14" height="21" viewBox="0 0 14 21"><path d="M.5 .8V16.900L4.100 13.300 6.700 19.100 9.300 18 6.700 12.300 11.800 11.800z" fill="#fff" stroke="#111" stroke-width="1" stroke-linejoin="round"/></svg>
</div>
<svg width="0" height="0" style="position:absolute"><defs>
<symbol id="i-coll" viewBox="0 0 16 16"><path d="M.8 1.200h14.400v3.800H.8zM1.700 6.200h12.600v8.400H1.700z M5.800 7.800h4.400v2H5.800z" fill-rule="evenodd"/></symbol>
<symbol id="i-chev-r" viewBox="0 0 16 16"><path d="M5.5 2.5L11 8l-5.500 5.500" fill="none" stroke="currentColor" stroke-width="1.3" stroke-linecap="round" stroke-linejoin="round"/></symbol>
<symbol id="i-chev-d" viewBox="0 0 16 16"><path d="M2.5 5.500L8 11l5.500-5.500" fill="none" stroke="currentColor" stroke-width="1.3" stroke-linecap="round" stroke-linejoin="round"/></symbol>
<symbol id="i-ddarrow" viewBox="0 0 10 10"><path d="M1.800 3.400L5 6.600l3.200-3.200" fill="none" stroke="currentColor" stroke-width="1.25" stroke-linecap="round" stroke-linejoin="round"/></symbol>
<symbol id="i-mesh" viewBox="0 0 16 16"><path d="M.6 1.600h14.800L9.300 15.400zM5.600 4.400L8.900 9.600 11.200 4.400z" fill-rule="evenodd"/></symbol>
<symbol id="i-arm" viewBox="0 0 16 16"><path d="M6.700 .8h2.600v2.600h5.900v2.700h-4.600l3.900 8.300-2.500 1.100L8 8.300 4 15.500l-2.500-1.100 3.900-8.300H.8V3.400h5.900z"/></symbol>
<symbol id="i-check" viewBox="0 0 12 12"><path d="M1.500 1h9a.5.5 0 0 1 .5.500v9a.5.5 0 0 1-.5.500h-9a.5.5 0 0 1-.5-.5v-9a.5.5 0 0 1 .5-.5zM2.600 6.100l1.100-1.200 1.700 1.700 3.300-3.500 1.200 1.100-4.500 4.900z" fill-rule="evenodd"/></symbol>
<symbol id="i-eye" viewBox="0 0 14 12"><path d="M7 1.200c3 0 5.400 2.200 6.600 4.400C12.400 8 10 10.200 7 10.200S1.600 8 .4 5.600C1.600 3.400 4 1.200 7 1.200zm0 1.200a3.300 3.300 0 1 0 0 6.600 3.300 3.300 0 0 0 0-6.600zm0 1.900a1.400 1.400 0 1 1 0 2.800 1.400 1.400 0 0 1 0-2.800z" fill-rule="evenodd"/></symbol>
<symbol id="i-eyeoff" viewBox="0 0 14 12"><path d="M.8 4.200Q7 11 13.200 4.200" fill="none" stroke="currentColor" stroke-width="1"/></symbol>
<symbol id="i-cam" viewBox="0 0 14 12"><path d="M4.400 .6h5.200l.9 1.700h3v9.200H.5V2.300h3zM7 3a3.600 3.600 0 1 0 0 7.200A3.600 3.600 0 0 0 7 3zm0 .9a2.700 2.700 0 1 1 0 5.400 2.700 2.700 0 0 1 0-5.400zm0 1.100a1.600 1.600 0 1 0 0 3.200A1.600 1.600 0 0 0 7 5z" fill-rule="evenodd"/></symbol>
</defs></svg>
<div id="outl" class="area">
<div class="abs" style="left:0;top:16px;width:379px;height:20px;background:#2b2b2b"></div>
<div class="abs" style="left:0;top:56px;width:379px;height:20px;background:#2b2b2b"></div>
<div class="abs" style="left:0;top:96px;width:379px;height:20px;background:#2b2b2b"></div>
<!-- row0 -->
<div class="abs" style="left:20px;top:-6px;width:19px;height:21px;border-radius:4px;background:#454545;border:1px solid #5c5c5c"></div>
<svg style="left:21.500px;top:-2.500px;color:#e8e8e8;fill:#e8e8e8" width="16" height="16"><use href="#i-coll"/></svg>
<div class="t" style="left:44px;top:0.700px;letter-spacing:-0.13px">Scene Collection</div>
<!-- row1 -->
<svg style="left:24px;top:20px;color:#c8c8c8" width="12" height="12"><use href="#i-chev-r"/></svg>
<svg style="left:42.500px;top:18.3px;fill:#e8e8e8" width="15" height="15"><use href="#i-coll"/></svg>
<div class="t" style="left:64px;top:20.700px;letter-spacing:-0.19px">Avatar</div>
<svg style="left:121px;top:18.500px;fill:#b2545b" width="14.500" height="14.500"><use href="#i-mesh"/></svg>
<div class="t" style="left:129px;top:24px;font-size:9.500px;letter-spacing:0.6px;text-shadow:0 0 2px #222,0 0 2px #222,0 0 1px #222">32</div>
<div class="abs" style="left:139px;top:17px;width:18px;height:18px;border-radius:4px;background:#575757;border:1px solid #6a6a6a"></div>
<svg style="left:141px;top:19px;fill:#b2545b" width="14" height="14"><use href="#i-arm"/></svg>
<svg style="left:160.500px;top:18.300px;fill:#e8e8e8" width="15" height="15"><use href="#i-coll"/></svg>
<div class="t" style="left:175px;top:24px;font-size:9.500px;text-shadow:0 0 2px #222,0 0 2px #222">2</div>
<svg style="left:317px;top:21px;fill:#e8e8e8" width="10" height="10"><use href="#i-check"/></svg>
<svg style="left:336px;top:20px;fill:#e8e8e8" width="13" height="11"><use href="#i-eye"/></svg>
<svg style="left:356px;top:19.500px;fill:#e8e8e8" width="13.500" height="11.500"><use href="#i-cam"/></svg>
<!-- row2 -->
<svg style="left:24px;top:40px;color:#707070" width="12" height="12"><use href="#i-chev-r"/></svg>
<svg style="left:42.500px;top:38.3px;fill:#858585" width="15" height="15"><use href="#i-coll"/></svg>
<div class="t dim" style="left:64px;top:40.700px;color:#8c8c8c;letter-spacing:-0.21px">Prop</div>
<svg style="left:112px;top:39px;fill:#777" width="14" height="14"><use href="#i-arm"/></svg>
<svg style="left:317px;top:41px;fill:#e8e8e8" width="10" height="10"><use href="#i-check"/></svg>
<svg style="left:336px;top:40px;color:#555" width="13" height="11"><use href="#i-eyeoff"/></svg>
<svg style="left:356px;top:39.500px;fill:#e8e8e8" width="13.500" height="11.500"><use href="#i-cam"/></svg>
<!-- row3 -->
<svg style="left:24px;top:60px;color:#707070" width="12" height="12"><use href="#i-chev-r"/></svg>
<svg style="left:42.500px;top:58.3px;fill:#858585" width="15" height="15"><use href="#i-coll"/></svg>
<div class="t dim" style="left:64px;top:60.700px;color:#8c8c8c;letter-spacing:-0.27px">Animation_Area_Reference</div>
<svg style="left:228px;top:58.500px;fill:#777" width="14.500" height="14.500"><use href="#i-mesh"/></svg>
<div class="t" style="left:241px;top:64px;font-size:9.500px;text-shadow:0 0 2px #222,0 0 2px #222">2</div>
<svg style="left:317px;top:61px;fill:#e8e8e8" width="10" height="10"><use href="#i-check"/></svg>
<svg style="left:336px;top:60px;color:#555" width="13" height="11"><use href="#i-eyeoff"/></svg>
<svg style="left:356px;top:59.500px;fill:#e8e8e8" width="13.500" height="11.500"><use href="#i-cam"/></svg>
</div>
<svg width="0" height="0" style="position:absolute"><defs>
<symbol id="i-bone" viewBox="0 0 14.400 14.400"><path d="M2.600 4.700L4.700 2.600 11.900 9.800 9.800 11.900z"/><ellipse cx="4.500" cy="1.900" rx="1.550" ry="1.900"/><ellipse cx="1.900" cy="4.500" rx="1.900" ry="1.550"/><ellipse cx="12.500" cy="9.700" rx="1.900" ry="1.550"/><ellipse cx="9.600" cy="12.500" rx="1.550" ry="1.900"/></symbol>
<symbol id="i-lock" viewBox="0 0 16 14"><path d="M1 5.200V3.900a3.300 3.300 0 0 1 6.600 0V5.400" fill="none" stroke="currentColor" stroke-width="1"/><path d="M6.300 5.400h8v5.900h-8z" fill="none" stroke="currentColor" stroke-width="1"/><path d="M8.700 7.300h3.300v1.700H8.700z" fill="currentColor"/></symbol>
<symbol id="i-grip" viewBox="0 0 12 6"><path d="M1 1h1.300v1.300H1zM4 1h1.300v1.300H4zM7 1h1.300v1.300H7zM10 1h1.300v1.300H10zM1 4h1.300v1.300H1zM4 4h1.300v1.300H4zM7 4h1.300v1.300H7zM10 4h1.300v1.300H10z"/></symbol>
<symbol id="i-objdata" viewBox="0 0 16 16"><path d="M1.500 5V1.500H5M11 1.500h3.500V5M14.500 11v3.500H11M5 14.500H1.500V11" fill="none" stroke="currentColor" stroke-width="1.200"/><rect x="4.300" y="4.300" width="7.400" height="7.400" rx=".8" fill="currentColor"/></symbol>
<symbol id="i-armdata" viewBox="0 0 14.400 14.400"><circle cx="6.600" cy="1.700" r="1.550" fill="currentColor"/><path d="M.6 .7L3.400 3.600H6.200M7.600 3.600H10.800L13.700 6.800M7.600 3.600V8.500M7.600 8.500H5.600Q3 9.600 2.600 13.900M7.600 8.500L10.600 11.500 13.700 12.800" fill="none" stroke="currentColor" stroke-width="1.300" stroke-linecap="round" stroke-linejoin="round"/></symbol>
<symbol id="i-pin" viewBox="0 0 16 16"><path d="M9.500 1.500l5 5-1.300 .4-2.200 2.200 .2 3-1.200 1.200-6.300-6.300 1.200-1.200 3 .2 2.200-2.200zM6.300 9.700L1.500 14.500" fill="none" stroke="currentColor" stroke-width="1.100" stroke-linejoin="round" stroke-linecap="round"/></symbol>
<symbol id="i-search" viewBox="0 0 16 16"><circle cx="10" cy="6" r="4.300" fill="none" stroke="currentColor" stroke-width="1.300"/><path d="M6.800 9.200L1.800 14.200" stroke="currentColor" stroke-width="1.500" stroke-linecap="round"/></symbol>
<symbol id="i-edtype" viewBox="0 0 16 16"><rect x="1.200" y="1.600" width="13.600" height="5.600" rx="2.800" fill="currentColor"/><rect x="1.200" y="8.800" width="13.600" height="5.600" rx="2.800" fill="currentColor"/><circle cx="11.800" cy="4.400" r="1.700" fill="#282828"/><circle cx="4.200" cy="11.600" r="1.700" fill="#282828"/></symbol>
</defs></svg>
<div id="props" class="area">
<!-- tab column -->
<div class="abs" style="left:0;top:25px;width:28px;height:763px;background:#1c1c1c"></div>
<div class="abs" style="left:0;top:25px;width:28px;height:36.500px;background:#222"></div>
<div class="abs" style="left:2px;top:330px;width:26px;height:26px;background:#303030;border-radius:4px 0 0 4px"></div>
<div class="abs" style="left:3px;top:61.500px;width:22px;height:1px;background:#2c2c2c"></div>
<div class="abs" style="left:3px;top:209.500px;width:22px;height:1px;background:#2c2c2c"></div>
<div class="abs" style="left:3px;top:385.500px;width:22px;height:1px;background:#2c2c2c"></div>
<!-- header -->
<div class="dd" style="left:8.600px;top:2.400px;width:31.400px;height:19.800px"></div>
<svg style="left:12px;top:5px;color:#e8e8e8" width="15" height="15"><use href="#i-edtype"/></svg>
<svg style="left:29px;top:8.500px;color:#e0e0e0" width="8" height="8"><use href="#i-ddarrow"/></svg>
<div class="abs" style="left:132.200px;top:2.400px;width:118.600px;height:19.800px;background:#1d1d1d;border:1px solid #414141;border-radius:4px"></div>
<svg style="left:136px;top:5.500px;color:#d0d0d0" width="14" height="14"><use href="#i-search"/></svg>
<div class="t" style="left:157.500px;top:5px;color:#7e7e7e;font-size:12px;letter-spacing:-0.51px">Search</div>
<div class="dd" style="left:354.200px;top:2.400px;width:19.600px;height:19.800px"></div>
<svg style="left:360px;top:8.500px;color:#e0e0e0" width="8" height="8"><use href="#i-ddarrow"/></svg>
<!-- breadcrumb -->
<svg style="left:38px;top:35.500px;color:#e6e6e6" width="15" height="15"><use href="#i-objdata"/></svg>
<div class="t" style="left:62px;top:36.500px;letter-spacing:-0.25px">Arma...</div>
<svg style="left:106.500px;top:37.300px;color:#d0d0d0" width="11" height="11"><use href="#i-chev-r"/></svg>
<svg style="left:124.900px;top:35.800px;color:#e6e6e6" width="14.400" height="14.400"><use href="#i-armdata"/></svg>
<div class="t" style="left:148px;top:36.500px;letter-spacing:-0.25px">Arma...</div>
<svg style="left:193.500px;top:37.300px;color:#d0d0d0" width="11" height="11"><use href="#i-chev-r"/></svg>
<svg style="left:211.800px;top:35.600px;fill:#e6e6e6" width="14.600" height="14.600"><use href="#i-bone"/></svg>
<div class="t" style="left:235px;top:36.500px;letter-spacing:-0.61px">CTRL_FK_Avatar_...</div>
<svg style="left:355px;top:35px;color:#a0a0a0" width="16.500" height="16.500"><use href="#i-pin"/></svg>
<!-- name -->
<svg style="left:38.600px;top:72.400px;fill:#e6e6e6" width="14.600" height="14.600"><use href="#i-bone"/></svg>
<div class="abs" style="left:64.300px;top:69.500px;width:308.900px;height:19.200px;background:#1d1d1d;border:1px solid #414141;border-radius:4px"></div>
<div class="t" style="left:72px;top:72.500px;letter-spacing:-0.53px">CTRL_FK_Avatar_Spine1</div>
<!-- tab icons: centre x=15.3 -->

<svg style="left:7.1px;top:38.4px" width="16.400" height="16.400" viewBox="0 0 16 16"><g fill="none" stroke="#c4c4c4" stroke-linecap="round"><path d="M3.400 1.600V8" stroke-width="1.100"/><path d="M10.800 6.200V13.400" stroke-width="2.200"/><path d="M8.300 1.800v2.600a2.600 2.600 0 0 0 5 0V1.800" stroke-width="1.500"/></g><ellipse cx="3.400" cy="11" rx="2.100" ry="2.500" fill="#c4c4c4"/></svg>
<svg style="left:7.1px;top:73.8px" width="16.400" height="16.400" viewBox="0 0 16 16"><g fill="none" stroke="#c4c4c4"><path d="M1.600 4.600h12.800v9.600H1.600z" stroke-width="1.300"/><path d="M4.600 4.400V2.600h3.800v1.800" stroke-width="1.200"/><path d="M3.600 7.300h6M3.600 9.400h6M3.600 11.500h6" stroke-width="1"/><path d="M11 2.500h2.400" stroke-width="1"/></g><rect x="11.200" y="6.800" width="1.900" height="1.900" fill="#c4c4c4"/><rect x="11.200" y="10.300" width="1.900" height="1.900" fill="#c4c4c4"/></svg>
<svg style="left:7.1px;top:102.8px" width="16.400" height="16.400" viewBox="0 0 16 16"><path d="M1.200 1.600h13.600v6h-2.200V5.200H3.400v2.400H1.200z" fill="#c4c4c4"/><path d="M4.400 6.200h7.200v8H4.400z" fill="#c4c4c4"/><path d="M5.400 13l2.300-3.300 1.300 1.600 .9-1 1 2.700z" fill="#1c1c1c"/><circle cx="9.800" cy="8.200" r=".8" fill="#1c1c1c"/></svg>
<svg style="left:7.1px;top:130.8px" width="16.400" height="16.400" viewBox="0 0 16 16"><path d="M5.200 1.400h9.400v9.400H5.200z" fill="#c4c4c4"/><path d="M6.200 9.800l2.600-4 1.700 2.300 1.100-1.200 1.800 2.900z" fill="#1c1c1c"/><circle cx="12.200" cy="3.900" r=".9" fill="#1c1c1c"/><path d="M3.600 3.600v8.800h8.800M1.600 5.600v8.800h8.800" fill="none" stroke="#c4c4c4" stroke-width="1"/></svg>
<svg style="left:7.1px;top:158.8px" width="16.400" height="16.400" viewBox="0 0 16 16"><path d="M4.600 1.400l3 7.500c.3 2-1 3.700-3 3.700s-3.300-1.700-3-3.700z" fill="#c4c4c4"/><circle cx="12.300" cy="3.600" r="2" fill="#c4c4c4"/><circle cx="10.400" cy="11" r="3.300" fill="#1c1c1c" stroke="#c4c4c4" stroke-width="1.200"/></svg>
<svg style="left:7.1px;top:186.8px" width="16.400" height="16.400" viewBox="0 0 16 16"><circle cx="8" cy="8.200" r="5.600" fill="none" stroke="#ad565b" stroke-width="1.100"/><path d="M3.600 6.200c1-1.600 2.600-2 3.800-1.400l.6 1.400-1.200 1.200-1.400.2-.4 1.400-1.200-.6zM9 8.400l1.800-.6 1.600 1 .2 1.600-1.600 1.800-1.400-.4-.2-1.600-.8-.8z" fill="#ad565b"/><path d="M1.800 14.400L14.200 2" stroke="#ad565b" stroke-width=".9" fill="none"/></svg>
<svg style="left:7.1px;top:222.3px" width="16.400" height="16.400" viewBox="0 0 16 16"><path d="M1.400 4.600V1.400h3.200M11.400 1.400h3.200v3.200M14.600 11.400v3.200h-3.200M4.600 14.600H1.400v-3.200" fill="none" stroke="#8a6568" stroke-width="1"/><rect x="3.900" y="3.900" width="8.200" height="8.200" rx=".7" fill="#bb5a60"/></svg>
<svg style="left:7.1px;top:250.8px" width="16.400" height="16.400" viewBox="0 0 16 16"><circle cx="7" cy="8.600" r="3" fill="#4c80d0"/><circle cx="12.800" cy="3" r="1.500" fill="#4c80d0"/><path d="M9.600 2.900A6.200 6.200 0 1 0 13 10.400" fill="none" stroke="#4c80d0" stroke-width="1.100"/></svg>
<svg style="left:7.1px;top:278.8px" width="16.400" height="16.400" viewBox="0 0 16 16"><path d="M12.200 1.300c1.700-.3 2.800 1 2.400 2.500-.6 2.400-2 6-4.400 8.600-2.200 2.300-6 2.400-7.800 .2-1.800-2.300-1.200-5.600 1.400-7.300 2.600-1.800 6.200-3.500 8.400-4z" fill="none" stroke="#4c80d0" stroke-width="1.200"/><circle cx="6.400" cy="9.400" r="2.900" fill="none" stroke="#4c80d0" stroke-width="1.700"/></svg>
<svg style="left:8px;top:307.500px;color:#7dc795" width="14.600" height="14.600"><use href="#i-armdata"/></svg>
<svg style="left:8px;top:335.700px;fill:#7dc795" width="14.600" height="14.600"><use href="#i-bone"/></svg>
<svg style="left:7.1px;top:362.3px" width="16.400" height="16.400" viewBox="0 0 16 16"><g fill="#4c80d0"><path d="M2 1.600a1.500 1.500 0 0 1 2.300 1.800l8.200 8.200a1.500 1.500 0 0 1 1.800 2.300 1.500 1.500 0 0 1-2.600 .5 1.500 1.500 0 0 1-.5-2l-8-8a1.500 1.500 0 0 1-2-.5 1.500 1.500 0 0 1 .8-2.300z"/></g><path d="M7.400 3.200c2.200-1.300 4.800-.9 6.200 1 1.400 2 .9 4.600-.6 6.200M9.600 13.600c-2.400 1-5.200 0-6.300-2.400-.7-1.500-.5-3.200 .3-4.500" fill="none" stroke="#4c80d0" stroke-width="1.200"/></svg>
<!-- Transform panel -->
<div class="panel" style="top:99px;height:276px">
<svg style="left:9px;top:8px;color:#d8d8d8" width="10" height="10"><use href="#i-chev-d"/></svg>
<div class="ph" style="letter-spacing:-0.06px">Transform</div>
<svg style="left:319px;top:9.500px;fill:#8a8a8a" width="11.500" height="5.800"><use href="#i-grip"/></svg>
</div>
<div class="t" style="right:219.5px;top:135.6px;letter-spacing:-0.06px">Location X</div>
<div class="fld" style="top:132.7px;height:18.700px;border-radius:3px 0 0 0;line-height:18.700px;padding-top:0.600px">0 m</div>
<svg style="left:327.200px;top:135.3px;color:#bcbcbc" width="16" height="14"><use href="#i-lock"/></svg>
<div class="abs" style="left:353px;top:140.0px;width:4.400px;height:4.400px;border-radius:50%;background:#e0e0e0"></div>
<div class="t" style="right:219.5px;top:155.3px">Y</div>
<div class="fld" style="top:152.4px;height:18.700px;border-radius:0;line-height:18.700px;padding-top:0.600px">0 m</div>
<svg style="left:327.200px;top:155.0px;color:#bcbcbc" width="16" height="14"><use href="#i-lock"/></svg>
<div class="abs" style="left:353px;top:159.7px;width:4.400px;height:4.400px;border-radius:50%;background:#e0e0e0"></div>
<div class="t" style="right:219.5px;top:175.0px">Z</div>
<div class="fld" style="top:172.1px;height:18.700px;border-radius:0 0 0 3px;line-height:18.700px;padding-top:0.600px">0 m</div>
<svg style="left:327.200px;top:174.7px;color:#bcbcbc" width="16" height="14"><use href="#i-lock"/></svg>
<div class="abs" style="left:353px;top:179.4px;width:4.400px;height:4.400px;border-radius:50%;background:#e0e0e0"></div>
<div class="t" style="right:219.5px;top:200.9px;letter-spacing:-0.14px">Rotation W</div>
<div class="fld" style="top:198.0px;height:18.700px;border-radius:3px 0 0 0;line-height:18.700px;padding-top:0.600px">0.996</div>
<svg style="left:327.200px;top:200.6px;color:#bcbcbc" width="16" height="14"><use href="#i-lock"/></svg>
<div class="abs" style="left:353px;top:205.3px;width:4.400px;height:4.400px;border-radius:50%;background:#e0e0e0"></div>
<div class="t" style="right:219.5px;top:220.6px">X</div>
<div class="fld" style="top:217.7px;height:18.700px;border-radius:0;line-height:18.700px;padding-top:0.600px">-0.068</div>
<svg style="left:327.200px;top:220.3px;color:#bcbcbc" width="16" height="14"><use href="#i-lock"/></svg>
<div class="abs" style="left:353px;top:225.0px;width:4.400px;height:4.400px;border-radius:50%;background:#e0e0e0"></div>
<div class="t" style="right:219.5px;top:240.3px">Y</div>
<div class="fld" style="top:237.4px;height:18.700px;border-radius:0;line-height:18.700px;padding-top:0.600px">0.034</div>
<svg style="left:327.200px;top:240.0px;color:#bcbcbc" width="16" height="14"><use href="#i-lock"/></svg>
<div class="abs" style="left:353px;top:244.7px;width:4.400px;height:4.400px;border-radius:50%;background:#e0e0e0"></div>
<div class="t" style="right:219.5px;top:260.0px">Z</div>
<div class="fld" style="top:257.1px;height:18.700px;border-radius:0 0 0 3px;line-height:18.700px;padding-top:0.600px">0.003</div>
<svg style="left:327.200px;top:259.7px;color:#bcbcbc" width="16" height="14"><use href="#i-lock"/></svg>
<div class="abs" style="left:353px;top:264.4px;width:4.400px;height:4.400px;border-radius:50%;background:#e0e0e0"></div>
<div class="t" style="right:219.5px;top:310.7px;letter-spacing:-0.48px">Scale X</div>
<div class="fld" style="top:307.8px;height:18.700px;border-radius:3px 0 0 0;line-height:18.700px;padding-top:0.600px">1.000</div>
<svg style="left:327.200px;top:310.4px;color:#bcbcbc" width="16" height="14"><use href="#i-lock"/></svg>
<div class="abs" style="left:353px;top:315.1px;width:4.400px;height:4.400px;border-radius:50%;background:#e0e0e0"></div>
<div class="t" style="right:219.5px;top:330.4px">Y</div>
<div class="fld" style="top:327.5px;height:18.700px;border-radius:0;line-height:18.700px;padding-top:0.600px">1.000</div>
<svg style="left:327.200px;top:330.1px;color:#bcbcbc" width="16" height="14"><use href="#i-lock"/></svg>
<div class="abs" style="left:353px;top:334.8px;width:4.400px;height:4.400px;border-radius:50%;background:#e0e0e0"></div>
<div class="t" style="right:219.5px;top:350.1px">Z</div>
<div class="fld" style="top:347.2px;height:18.700px;border-radius:0 0 0 3px;line-height:18.700px;padding-top:0.600px">1.000</div>
<svg style="left:327.200px;top:349.8px;color:#bcbcbc" width="16" height="14"><use href="#i-lock"/></svg>
<div class="abs" style="left:353px;top:354.5px;width:4.400px;height:4.400px;border-radius:50%;background:#e0e0e0"></div>
<div class="t" style="right:219.500px;top:285.300px;letter-spacing:-0.06px">Mode</div>
<div class="abs" style="left:170px;top:283px;width:154px;height:17.800px;background:#282828;border-radius:3px"></div>
<div class="t" style="left:177px;top:285.300px;letter-spacing:-0.18px">Quaternion (WXYZ)</div>
<svg style="left:313px;top:288.500px;color:#e0e0e0" width="8" height="8"><use href="#i-ddarrow"/></svg>
<div class="abs" style="left:353px;top:289.700px;width:4.400px;height:4.400px;border-radius:50%;background:#e0e0e0"></div>
<!-- Bendy Bones -->
<div class="panel" style="top:377px;height:25px">
<svg style="left:9px;top:7.500px;color:#d8d8d8" width="10" height="10"><use href="#i-chev-r"/></svg>
<div class="ph" style="letter-spacing:-0.30px">Bendy Bones</div>
<svg style="left:319px;top:9.500px;fill:#8a8a8a" width="11.500" height="5.800"><use href="#i-grip"/></svg>
</div>
<!-- Relations -->
<div class="panel" style="top:404.300px;height:241.500px">
<svg style="left:9px;top:8px;color:#d8d8d8" width="10" height="10"><use href="#i-chev-d"/></svg>
<div class="ph" style="letter-spacing:-0.23px">Relations</div>
<svg style="left:319px;top:9.500px;fill:#8a8a8a" width="11.500" height="5.800"><use href="#i-grip"/></svg>
<!-- sub panel body -->
<div class="abs" style="left:0;top:195.400px;width:337px;height:46.100px;background:#434343;border-radius:0 0 4px 4px"></div>
<svg style="left:23px;top:179.500px;color:#d8d8d8" width="10" height="10"><use href="#i-chev-d"/></svg>
<div class="t" style="left:36.300px;top:177.300px;letter-spacing:-0.05px">Bone Collections</div>
<div class="abs" style="left:8.900px;top:204.300px;width:319.200px;height:29.100px;background:#282828;border-radius:4px;border:1px solid #333"></div>
<div class="t" style="left:14px;top:212px;letter-spacing:-0.01px">Global/Switch</div>
<svg style="left:259px;top:213.500px;color:#d0d0d0" width="15" height="12"><use href="#i-eyeoff"/></svg>
<svg style="left:279px;top:210.500px" width="14" height="14" viewBox="0 0 16 16"><path d="M8 1.800l1.900 4 4.400 .6-3.200 3 .8 4.400L8 11.700l-3.900 2.100 .8-4.400-3.200-3 4.400-.6z" fill="none" stroke="#e0e0e0" stroke-width="1.200" stroke-linejoin="round"/></svg>
<svg style="left:309px;top:212.500px" width="10" height="10" viewBox="0 0 10 10"><path d="M1 1l8 8M9 1l-8 8" stroke="#e0e0e0" stroke-width="1.200" stroke-linecap="round"/></svg>
</div>
<!-- relations contents (props coords) -->
<div class="t" style="right:219.500px;top:440px;letter-spacing:-0.43px">Parent</div>
<div class="abs" style="left:170px;top:438.200px;width:174px;height:17.800px;background:#333;border-radius:3px"></div>
<svg style="left:174px;top:440.500px;fill:#7a7a7a" width="13" height="13"><use href="#i-bone"/></svg>
<div class="t" style="left:195px;top:440px;color:#8a8a8a;letter-spacing:-0.56px">CTRL_FK_Avatar_Spine</div>
<div class="abs" style="left:170.200px;top:463px;width:12px;height:12px;border-radius:2.500px;background:#545454"></div>
<div class="t" style="left:186.500px;top:462px;letter-spacing:-0.24px">Relative Parenting</div>
<div class="abs" style="left:353px;top:466.800px;width:4.400px;height:4.400px;border-radius:50%;background:#e0e0e0"></div>
<div class="abs" style="left:170.200px;top:485px;width:12px;height:12px;border-radius:2.500px;background:#444"></div>
<div class="t" style="left:186.500px;top:484px;color:#878787;letter-spacing:-0.12px">Connected</div>
<div class="abs" style="left:353px;top:488.800px;width:4.400px;height:4.400px;border-radius:50%;background:#585858"></div>
<div class="abs blue" style="left:170.200px;top:507.200px;width:12px;height:12px;border-radius:2.500px"></div>
<svg style="left:170.200px;top:507.200px" width="12" height="12" viewBox="0 0 12 12"><path d="M2.600 6.200l2.300 2.500 4.500-5.700" fill="none" stroke="#fff" stroke-width="1.500" stroke-linecap="round" stroke-linejoin="round"/></svg>
<div class="t" style="left:186.500px;top:506.200px;letter-spacing:-0.11px">Local Location</div>
<div class="abs" style="left:353px;top:511px;width:4.400px;height:4.400px;border-radius:50%;background:#e0e0e0"></div>
<div class="abs blue" style="left:170.200px;top:529px;width:12px;height:12px;border-radius:2.500px"></div>
<svg style="left:170.200px;top:529px" width="12" height="12" viewBox="0 0 12 12"><path d="M2.600 6.200l2.300 2.500 4.500-5.700" fill="none" stroke="#fff" stroke-width="1.500" stroke-linecap="round" stroke-linejoin="round"/></svg>
<div class="t" style="left:186.500px;top:528px;letter-spacing:0.08px">Inherit Rotation</div>
<div class="abs" style="left:353px;top:532.800px;width:4.400px;height:4.400px;border-radius:50%;background:#e0e0e0"></div>
<div class="t" style="right:219.500px;top:550px;letter-spacing:0.05px">Inherit Scale</div>
<div class="abs" style="left:170px;top:548px;width:174px;height:17.800px;background:#282828;border-radius:3px"></div>
<div class="t" style="left:177px;top:550px;letter-spacing:0.04px">Full</div>
<svg style="left:333px;top:553.500px;color:#e0e0e0" width="8" height="8"><use href="#i-ddarrow"/></svg>
<div class="abs" style="left:353px;top:554.700px;width:4.400px;height:4.400px;border-radius:50%;background:#e0e0e0"></div>
<!-- collapsed panels -->
<div class="panel" style="top:648px;height:25px"><svg style="left:9px;top:7.500px;color:#d8d8d8" width="10" height="10"><use href="#i-chev-r"/></svg><div class="ph" style="letter-spacing:-0.05px">Inverse Kinematics</div><svg style="left:319px;top:9.500px;fill:#8a8a8a" width="11.500" height="5.800"><use href="#i-grip"/></svg></div>
<div class="panel" style="top:675px;height:25px"><svg style="left:9px;top:7.500px;color:#d8d8d8" width="10" height="10"><use href="#i-chev-r"/></svg><div class="abs" style="left:21px;top:6.500px;width:12px;height:12px;border-radius:2.500px;background:#545454"></div><div class="ph" style="left:37px;letter-spacing:-0.22px">Deform</div><svg style="left:319px;top:9.500px;fill:#8a8a8a" width="11.500" height="5.800"><use href="#i-grip"/></svg></div>
<div class="panel" style="top:702.200px;height:25px"><svg style="left:9px;top:7.500px;color:#d8d8d8" width="10" height="10"><use href="#i-chev-r"/></svg><div class="ph" style="letter-spacing:0.05px">Viewport Display</div><svg style="left:319px;top:9.500px;fill:#8a8a8a" width="11.500" height="5.800"><use href="#i-grip"/></svg></div>
<div class="panel" style="top:729.300px;height:24.500px"><svg style="left:9px;top:7.500px;color:#d8d8d8" width="10" height="10"><use href="#i-chev-r"/></svg><div class="ph" style="letter-spacing:-0.04px">Custom Properties</div><svg style="left:319px;top:9.500px;fill:#8a8a8a" width="11.500" height="5.800"><use href="#i-grip"/></svg></div>
</div>
<svg width="0" height="0" style="position:absolute"><defs>
<symbol id="i-sel" viewBox="0 0 16 16"><path d="M3.200 1.600l10.400 6.800-4.600 1.200-1.800 4.600z" fill="currentColor"/></symbol>
<symbol id="i-box" viewBox="0 0 16 16"><path d="M1.200 4.200V1.200h3M11.800 1.200h3v3M14.800 11.800v3h-3M4.200 14.800h-3v-3" fill="none" stroke="currentColor" stroke-width="1.200"/><rect x="4" y="4" width="8" height="8" fill="none" stroke="currentColor" stroke-width="1.100" stroke-dasharray="2.200 1.400"/></symbol>
<symbol id="i-warn" viewBox="0 0 16 16"><path d="M8 .9l7.300 13.700H.7zM7.100 5.200l.3 5.200h1.200l.3-5.200zM7.100 11.500h1.800v1.800H7.100z" fill="currentColor" fill-rule="evenodd"/></symbol>
<symbol id="i-filter" viewBox="0 0 16 16"><path d="M1.200 1.800h13.600L9.400 8.400v6l-2.800-1.800V8.400z" fill="none" stroke="currentColor" stroke-width="1.250" stroke-linejoin="round"/></symbol>
<symbol id="i-magnet" viewBox="0 0 18 18"><path d="M5.69 7.67A4.3 4.3 0 1 1 10.98 13.44M5.39 9.95A4.3 4.3 0 0 1 5.44 8.46M10.17 13.62A4.3 4.3 0 0 1 8.61 13.52" fill="none" stroke="currentColor" stroke-width="3.600"/><path d="M2 15.500V13.900H4V11.900H5.600" stroke="currentColor" stroke-width="1" fill="none" stroke-opacity=".8"/></symbol>
<symbol id="i-prop" viewBox="0 0 16 16"><circle cx="8" cy="8" r="6" fill="none" stroke="currentColor" stroke-width="1.100"/><circle cx="8" cy="8" r="2" fill="currentColor"/></symbol>
<symbol id="i-curve" viewBox="0 0 16 16"><path d="M1 13.800c4 0 4.600-11.600 7-11.600s3 11.600 7 11.600" fill="none" stroke="currentColor" stroke-width="1.100"/></symbol>
<symbol id="i-snapdot" viewBox="0 0 16 16"><path d="M1.400 4.600V1.400h3.200M11.400 1.400h3.200v3.200M14.600 11.400v3.200h-3.200M4.600 14.600H1.400v-3.200" fill="none" stroke="currentColor" stroke-width="1.200"/><circle cx="8" cy="8" r="1.700" fill="currentColor"/></symbol>
<symbol id="i-action" viewBox="0 0 16 16"><path d="M2.400 1l2 2-2 2-2-2zM13.600 1l2 2-2 2-2-2zM4.200 1.600h7.600L10.400 3l1.400 1.400H4.200L5.600 3z" fill="currentColor"/><path d="M5.800 8.200l2.800 2.800-2.800 2.800L3 11z" fill="none" stroke="currentColor" stroke-width="1.100"/></symbol>
<symbol id="i-layer" viewBox="0 0 16 16"><path d="M2.400 1l2 2-2 2-2-2zM13.600 1l2 2-2 2-2-2zM4.200 1.600h7.600L10.400 3l1.400 1.400H4.200L5.600 3z" fill="currentColor"/><path d="M3 8v4.200h3" fill="none" stroke="currentColor" stroke-width="1"/><rect x="7.600" y="10.400" width="7" height="3.200" fill="currentColor"/></symbol>
</defs></svg>
<div id="p1" class="area">
<div class="btn blue" style="left:779.200px;top:4px;width:18px;height:18.200px;border-radius:3px 0 0 3px"></div>
<svg style="left:781px;top:6px;color:#fff" width="14" height="14"><use href="#i-sel"/></svg>
<div class="btn" style="left:797.700px;top:4px;width:19.500px;height:18.200px;border-radius:0"></div>
<svg style="left:800.200px;top:6px;color:#e6e6e6" width="14.500" height="14.500"><use href="#i-box"/></svg>
<div class="btn" style="left:817.700px;top:4px;width:19.400px;height:18.200px;border-radius:0 3px 3px 0"></div>
<svg style="left:820.200px;top:6px;color:#eaeaea" width="14.500" height="14.500"><use href="#i-warn"/></svg>
<div class="btn" style="left:844px;top:4px;width:18px;height:18.200px;background:#3d3d3d"></div>
<svg style="left:846px;top:6px" width="14" height="14" viewBox="0 0 16 16"><path d="M2.600 2.600h9.600v9.600H2.600zM3 12l8.600-8.600M0.800 13.400h14M13.400 12v3.200" fill="none" stroke="#585858" stroke-width="1.100"/></svg>
<div class="dd" style="left:868.700px;top:4px;width:30.500px;height:18.200px"></div>
<svg style="left:871.500px;top:5.700px;color:#e6e6e6" width="14.500" height="14.500"><use href="#i-filter"/></svg>
<svg style="left:888.500px;top:9.500px;color:#e0e0e0" width="8" height="8"><use href="#i-ddarrow"/></svg>
<div class="dd" style="left:905.800px;top:4px;width:30.600px;height:18.200px"></div>
<svg style="left:909px;top:6px;color:#e6e6e6" width="14" height="14"><use href="#i-snapdot"/></svg>
<svg style="left:925.500px;top:9.500px;color:#e0e0e0" width="8" height="8"><use href="#i-ddarrow"/></svg>
<div class="dd" style="left:943px;top:4px;width:38px;height:18.200px"></div>
<div class="btn blue" style="left:943px;top:4px;width:17.700px;height:18.200px;border-radius:3px 0 0 3px"></div>
<svg style="left:943px;top:4px;color:#fff" width="18" height="18"><use href="#i-magnet"/></svg>
<svg style="left:966.500px;top:9.500px;color:#e0e0e0" width="8" height="8"><use href="#i-ddarrow"/></svg>
<div class="dd" style="left:987.800px;top:4px;width:50.200px;height:18.200px;background:#2c2c2c;border-color:#383838"></div>
<div class="btn" style="left:987.800px;top:4px;width:18.700px;height:18.200px;border-radius:3px 0 0 3px;background:#4a4a4a"></div>
<svg style="left:990px;top:6px;color:#a8a8a8" width="14" height="14"><use href="#i-prop"/></svg>
<svg style="left:1009px;top:6px;color:#5a5a5a" width="14" height="14"><use href="#i-curve"/></svg>
<svg style="left:1026.500px;top:9.500px;color:#5a5a5a" width="8" height="8"><use href="#i-ddarrow"/></svg>
</div>
<div id="p2" class="area">
<!-- ruler -->
<div class="abs" style="left:0;top:25px;width:826px;height:28px;background:#1c1c1c"></div>
<div class="abs" style="left:0;top:48px;width:826px;height:5px;background:repeating-linear-gradient(90deg,#3b2f2f 0,#3b2f2f 41px,#221c1c 41px,#221c1c 42px);background-position:-1.600px 0"></div>
<div class="abs blue" style="left:-8px;top:28px;width:17.200px;height:17px;border-radius:4px"></div>
<div class="abs" style="left:-1.500px;top:34.500px;width:2.600px;height:3px;border-radius:1px;background:#dfe8f6"></div>
<div class="t" style="left:61.4px;width:40px;text-align:center;top:30px;color:#b4b4b4;font-size:11.500px">5</div>
<div class="t" style="left:145.4px;width:40px;text-align:center;top:30px;color:#b4b4b4;font-size:11.500px">10</div>
<div class="t" style="left:229.4px;width:40px;text-align:center;top:30px;color:#b4b4b4;font-size:11.500px">15</div>
<div class="t" style="left:313.4px;width:40px;text-align:center;top:30px;color:#b4b4b4;font-size:11.500px">20</div>
<div class="t" style="left:397.4px;width:40px;text-align:center;top:30px;color:#b4b4b4;font-size:11.500px">25</div>
<div class="t" style="left:481.4px;width:40px;text-align:center;top:30px;color:#b4b4b4;font-size:11.500px">30</div>
<div class="t" style="left:565.4px;width:40px;text-align:center;top:30px;color:#b4b4b4;font-size:11.500px">35</div>
<div class="t" style="left:649.4px;width:40px;text-align:center;top:30px;color:#b4b4b4;font-size:11.500px">40</div>
<div class="t" style="left:733.4px;width:40px;text-align:center;top:30px;color:#b4b4b4;font-size:11.500px">45</div>
<!-- p2 header left -->
<div class="dd" style="left:90.600px;top:4px;width:31px;height:18.200px;border-radius:3px 0 0 3px"></div>
<svg style="left:92.500px;top:4.800px;color:#e6e6e6" width="16.500" height="16.500"><use href="#i-action"/></svg>
<svg style="left:111px;top:9.500px;color:#e0e0e0" width="8" height="8"><use href="#i-ddarrow"/></svg>
<div class="abs" style="left:121.800px;top:4px;width:121.600px;height:18.200px;background:#1d1d1d;border:1px solid #383838;border-left:none"></div>
<div class="t" style="left:129.500px;top:6.200px;letter-spacing:-0.17px">StartingPose_Avatar</div>
<div class="btn blue" style="left:243.800px;top:4px;width:19.200px;height:18.200px;border-radius:0"></div>
<svg style="left:246px;top:5.500px" width="15" height="15" viewBox="0 0 16 16"><path d="M8 1l6.200 2.200c0 5.200-1.800 9.400-6.200 11.800C3.600 12.600 1.800 8.400 1.800 3.200z" fill="#fff"/><path d="M5 7.600l2.400 2.500 4-4.600" fill="none" stroke="#4772b3" stroke-width="1.500"/></svg>
<div class="btn" style="left:263.700px;top:4px;width:19.600px;height:18.200px;border-radius:0"></div>
<svg style="left:266px;top:5.500px" width="15" height="15" viewBox="0 0 16 16"><path d="M5.200 1.200h6.600l3 3v7.600H5.200z" fill="none" stroke="#e6e6e6" stroke-width="1.100"/><path d="M11.400 1.400v3.400h3.200" fill="none" stroke="#e6e6e6" stroke-width="1"/><path d="M3.400 4.400H1.400v10.200h9V12.600" fill="none" stroke="#e6e6e6" stroke-width="1.100"/></svg>
<div class="btn" style="left:283.900px;top:4px;width:19.200px;height:18.200px;border-radius:0 3px 3px 0"></div>
<svg style="left:289px;top:8.500px" width="9.500" height="9.500" viewBox="0 0 10 10"><path d="M1 1l8 8M9 1l-8 8" stroke="#e6e6e6" stroke-width="1.100" stroke-linecap="round"/></svg>
<div class="dd" style="left:313px;top:4px;width:30.600px;height:18.200px;border-radius:3px 0 0 3px"></div>
<svg style="left:315px;top:4.800px;color:#e6e6e6" width="16.500" height="16.500"><use href="#i-layer"/></svg>
<svg style="left:333.500px;top:9.500px;color:#e0e0e0" width="8" height="8"><use href="#i-ddarrow"/></svg>
<div class="btn" style="left:344px;top:4px;width:99px;height:18.200px;border-radius:0 3px 3px 0"></div>
<svg style="left:350px;top:8px" width="10.500" height="10.500" viewBox="0 0 10 10"><path d="M5 .5v9M.5 5h9" stroke="#e6e6e6" stroke-width="1" /></svg>
<div class="t" style="left:391px;top:6.200px;font-size:11.500px;letter-spacing:-0.17px">New</div>
<!-- p2 header right -->
<div class="btn" style="left:820px;top:4px;width:18.700px;height:18.200px;border-radius:3px 0 0 3px"></div>
<svg style="left:821.200px;top:4.800px;color:#e6e6e6" width="16.500" height="16.500"><use href="#i-layer"/></svg>
<div class="btn blue" style="left:839.200px;top:4px;width:18.700px;height:18.200px;border-radius:0"></div>
<svg style="left:841.500px;top:6px;color:#fff" width="14" height="14"><use href="#i-sel"/></svg>
<div class="btn blue" style="left:858.600px;top:4px;width:19.300px;height:18.200px;border-radius:0"></div>
<svg style="left:861px;top:6px;color:#fff" width="14.500" height="14.500"><use href="#i-box"/></svg>
<div class="btn" style="left:878.500px;top:4px;width:19.400px;height:18.200px;border-radius:0 3px 3px 0"></div>
<svg style="left:881px;top:6px;color:#eaeaea" width="14.500" height="14.500"><use href="#i-warn"/></svg>
<div class="dd" style="left:904.400px;top:4px;width:30.800px;height:18.200px"></div>
<svg style="left:907.300px;top:5.700px;color:#e6e6e6" width="14.500" height="14.500"><use href="#i-filter"/></svg>
<svg style="left:924.500px;top:9.500px;color:#e0e0e0" width="8" height="8"><use href="#i-ddarrow"/></svg>
<div class="dd" style="left:942px;top:4px;width:38px;height:18.200px"></div>
<div class="btn blue" style="left:942px;top:4px;width:18px;height:18.200px;border-radius:3px 0 0 3px"></div>
<svg style="left:942px;top:4px;color:#fff" width="18" height="18"><use href="#i-magnet"/></svg>
<svg style="left:965.500px;top:9.500px;color:#e0e0e0" width="8" height="8"><use href="#i-ddarrow"/></svg>
<div class="dd" style="left:986.800px;top:4px;width:50.200px;height:18.200px;background:#2c2c2c;border-color:#383838"></div>
<div class="btn" style="left:986.800px;top:4px;width:18.700px;height:18.200px;border-radius:3px 0 0 3px;background:#4a4a4a"></div>
<svg style="left:989px;top:6px;color:#a8a8a8" width="14" height="14"><use href="#i-prop"/></svg>
<svg style="left:1008px;top:6px;color:#5a5a5a" width="14" height="14"><use href="#i-curve"/></svg>
<svg style="left:1025.500px;top:9.500px;color:#5a5a5a" width="8" height="8"><use href="#i-ddarrow"/></svg>
<!-- Action side panel -->
<div class="abs" style="left:834.200px;top:26.800px;width:204px;height:27px;background:#3d3d3d;border-radius:4px 4px 0 0"></div>
<svg style="left:842.500px;top:34.500px;color:#d8d8d8" width="10.500" height="10.500"><use href="#i-chev-d"/></svg>
<div class="t" style="left:856px;top:32.600px;font-size:12.500px;letter-spacing:-0.21px">Action</div>
<svg style="left:1019px;top:37px;fill:#8a8a8a" width="11.500" height="5.800"><use href="#i-grip"/></svg>
<div class="abs" style="left:1040.500px;top:27px;width:2.300px;height:25px;background:#3d3d3d"></div>
</div>
<div id="p3" class="area">
<div class="dd" style="left:186px;top:4px;width:38px;height:18.200px"></div>
<div class="btn blue" style="left:186px;top:4px;width:18px;height:18.200px;border-radius:3px 0 0 3px"></div>
<div class="abs" style="left:190.500px;top:8.600px;width:9px;height:9px;border-radius:50%;background:#b4555a;box-shadow:0 0 0 1px rgba(240,210,212,0.75)"></div>
<svg style="left:209.500px;top:9.500px;color:#e0e0e0" width="8" height="8"><use href="#i-ddarrow"/></svg>
<div class="btn" style="left:231.3px;top:4px;width:19.300px;height:18.200px;border-radius:3px 0 0 3px"></div>
<svg style="left:233.2px;top:5.300px" width="15.500" height="15.500" viewBox="0 0 16 16"><path d="M3 2.500v11" stroke="#eee" stroke-width="1.800"/><path d="M13 2.500v11L5 8z" fill="#eee"/></svg>
<div class="btn" style="left:251.1px;top:4px;width:19.300px;height:18.200px;border-radius:0"></div>
<svg style="left:253.0px;top:5.300px" width="15.500" height="15.500" viewBox="0 0 16 16"><path d="M5 3.400L9.600 8 5 12.600 .4 8z" fill="#eee"/><path d="M15.200 3.600v8.800L9.800 8z" fill="#eee"/></svg>
<div class="btn" style="left:270.8px;top:4px;width:19.300px;height:18.200px;border-radius:0"></div>
<svg style="left:272.7px;top:5.300px" width="15.500" height="15.500" viewBox="0 0 16 16"><path d="M12.500 2v12L3 8z" fill="#eee"/></svg>
<div class="btn" style="left:290.6px;top:4px;width:19.300px;height:18.200px;border-radius:0"></div>
<svg style="left:292.5px;top:5.300px" width="15.500" height="15.500" viewBox="0 0 16 16"><path d="M3.500 2v12L13 8z" fill="#eee"/></svg>
<div class="btn" style="left:310.3px;top:4px;width:19.300px;height:18.200px;border-radius:0"></div>
<svg style="left:312.2px;top:5.300px" width="15.500" height="15.500" viewBox="0 0 16 16"><path d="M11 3.400L15.600 8 11 12.600 6.400 8z" fill="#eee"/><path d="M.8 3.600v8.800L6.200 8z" fill="#eee"/></svg>
<div class="btn" style="left:330.1px;top:4px;width:19.300px;height:18.200px;border-radius:0 3px 3px 0"></div>
<svg style="left:332.0px;top:5.300px" width="15.500" height="15.500" viewBox="0 0 16 16"><path d="M13 2.500v11" stroke="#eee" stroke-width="1.800"/><path d="M3 2.500v11L11 8z" fill="#eee"/></svg>
<div class="fld" style="left:764.700px;top:3.700px;width:73.500px;height:18.300px;border-radius:3px;line-height:18.300px">0</div>
<div class="btn" style="left:845px;top:3.700px;width:18.400px;height:18.300px;border-radius:3px 0 0 3px"></div>
<svg style="left:846.500px;top:5px" width="15.500" height="15.500" viewBox="0 0 16 16"><circle cx="7.600" cy="9" r="5" fill="none" stroke="#e6e6e6" stroke-width="1.100"/><path d="M7.600 6v3.200h2.600M6 1.800h3.200M7.600 1.800v2M11.600 4.600l1.800-1.600" fill="none" stroke="#e6e6e6" stroke-width="1.100"/></svg>
<div class="btn" style="left:864px;top:3.700px;width:88px;height:18.300px;border-radius:0"></div>
<div class="t" style="left:879px;top:6px;font-size:11.500px;letter-spacing:0.24px">Start</div><div class="t" style="left:925px;width:14px;text-align:right;top:6px;font-size:11.500px">0</div>
<div class="btn" style="left:952.600px;top:3.700px;width:85.700px;height:18.300px;border-radius:0 3px 3px 0"></div>
<div class="t" style="left:968px;top:6px;font-size:11.500px;letter-spacing:0.01px">End</div><div class="t" style="left:1000px;width:25px;text-align:right;top:6px;font-size:11.500px">299</div>
</div>
</div></body></html>
